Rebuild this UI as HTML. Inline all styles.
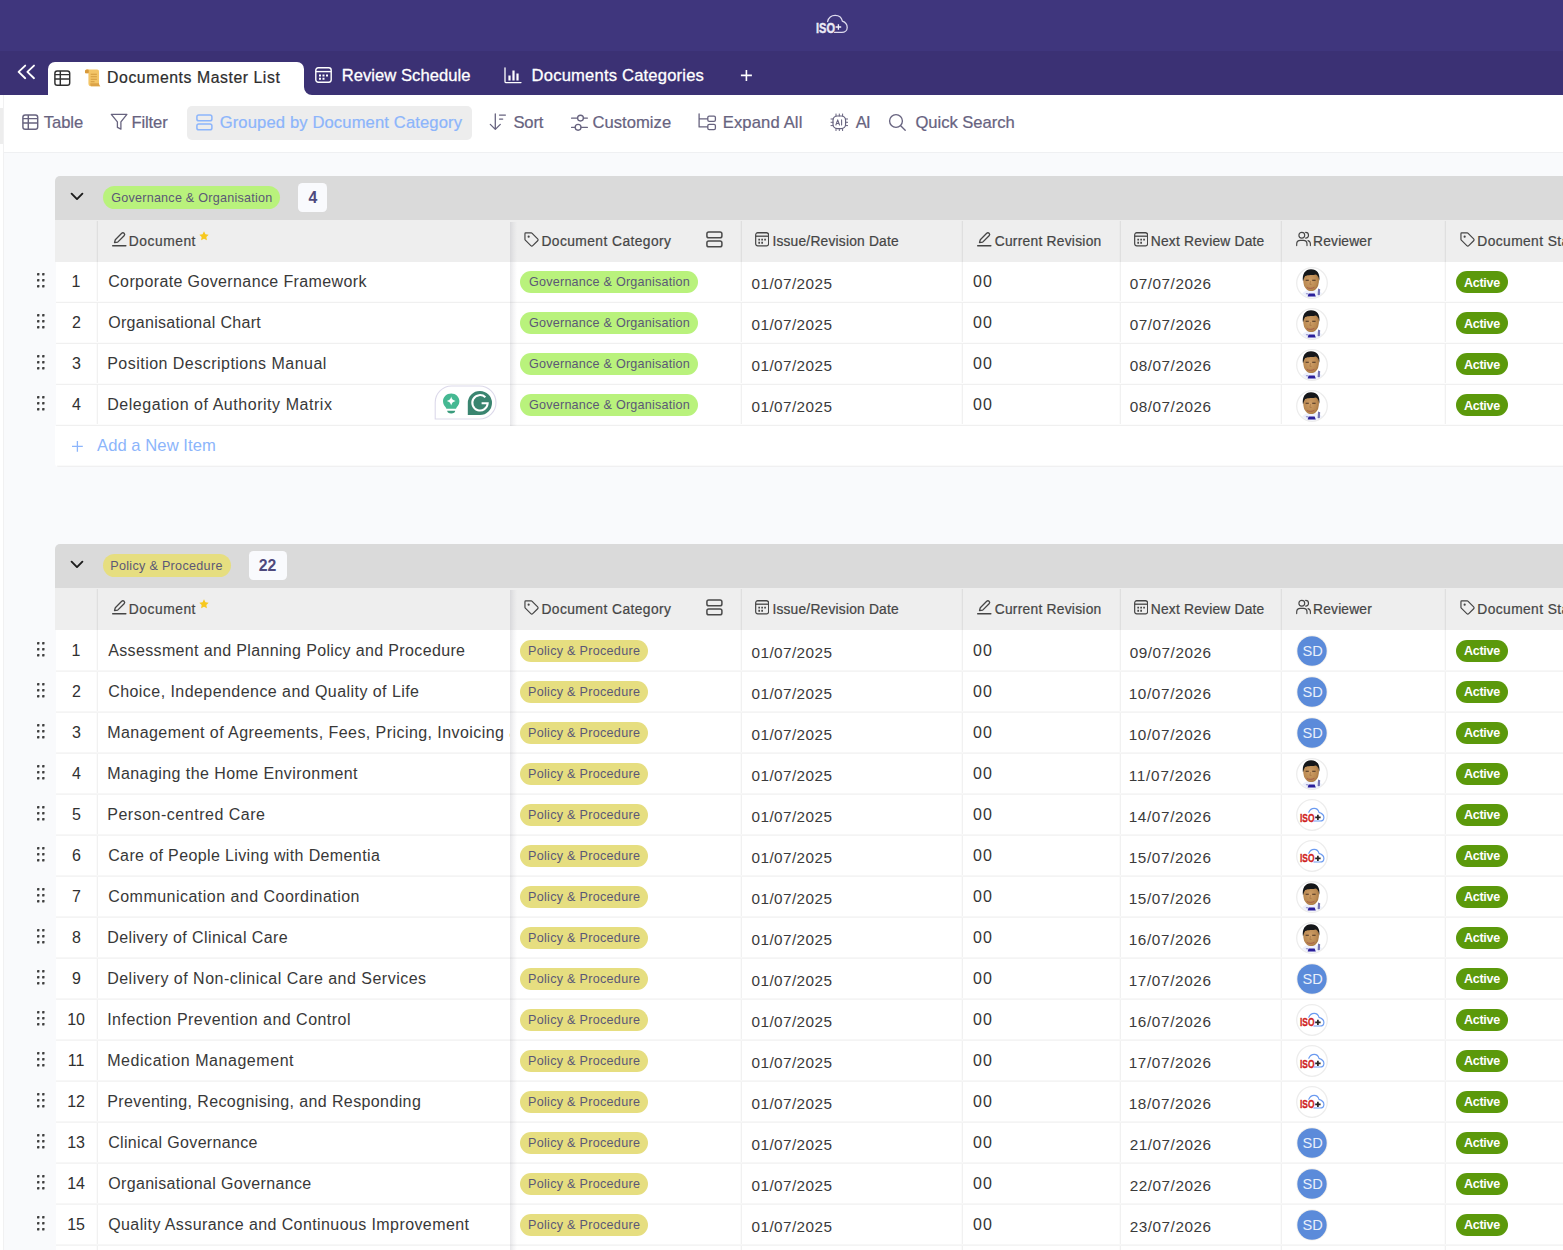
<!DOCTYPE html>
<html lang="en"><head><meta charset="utf-8"><title>Documents Master List</title>
<style>
html,body{margin:0;padding:0;}
body{width:1563px;height:1250px;overflow:hidden;position:relative;background:#f9fafc;font-family:"Liberation Sans", sans-serif;}
#root{position:absolute;left:0;top:0;width:1563px;height:1250px;overflow:hidden;}
#root>div,#root>svg,#root>span{position:absolute;display:block;}
#root>span{white-space:pre;line-height:1;}
</style></head><body><div id="root">
<div style="left:0px;top:0px;width:1563px;height:51px;background:#3f367d;"></div>
<div style="left:0px;top:51px;width:1563px;height:44px;background:#3b3174;"></div>
<div style="left:0px;top:95px;width:1563px;height:57px;background:#ffffff;"></div>
<div style="left:0px;top:151.5px;width:1563px;height:1px;background:#eff0f2;"></div>
<div style="left:0px;top:95px;width:3.2px;height:1155px;background:#ffffff;"></div>
<div style="left:0px;top:108px;width:3.2px;height:36px;background:#ededed;"></div>
<div style="left:3.2px;top:95px;width:1.2px;height:1155px;background:#f1f1f2;"></div>
<svg style="left:811.6px;top:10px;" width="40" height="28" viewBox="0 0 40 28" fill="none">
<path d="M15.6 11.6 C16.6 7.6 19.8 5.4 23.2 5.4 C27 5.4 29.6 7.8 30.4 11.2 C33.2 12.2 35.2 14.6 35.2 17.4 C35.2 20.4 32.8 22.4 29.8 22.4 L22.6 22.4" stroke="#dedbee" stroke-width="1.25" stroke-linecap="round" fill="none"/>
<path d="M23.6 17 H29.2 M26.4 14.2 V19.8" stroke="#f4f3fa" stroke-width="1.3"/>
</svg>
<div style="left:48px;top:61.5px;width:255.5px;height:34px;background:#ffffff;border-radius:7px 7px 0 0;"></div>
<svg style="left:303.5px;top:87px;" width="8" height="8" viewBox="0 0 8 8" fill="none"><path d="M0 0 V8 H8 A8 8 0 0 1 0 0 Z" fill="#ffffff"/></svg>
<svg style="left:14px;top:60px;" width="26" height="24" viewBox="0 0 26 24" fill="none"><path d="M11.2 5.6 L4.6 11.9 L11.2 18.2 M20 5.6 L13.4 11.9 L20 18.2" stroke="#ffffff" stroke-width="1.9" stroke-linecap="round" stroke-linejoin="round"/></svg>
<svg style="left:54.3px;top:69.6px;" width="17" height="17" viewBox="0 0 17 17" fill="none"><rect x="0.9" y="0.9" width="14.8" height="14.4" rx="2.3" stroke="#2f2f2f" stroke-width="1.45"/><path d="M0.9 4.6 H15.7 M0.9 8.9 H15.7 M6.3 0.9 V15.3" stroke="#2f2f2f" stroke-width="1.45"/></svg>
<svg style="left:83.6px;top:67.1px;" width="17.3" height="21.6" viewBox="0 0 18 19" fill="none" preserveAspectRatio="none">
<path d="M4.2 2.2 H13.6 C15 2.2 15.6 3 15.6 4.2 V14.4 C15.6 15.8 16.2 16.6 17 17 H7.2 C5.4 17 4.6 16 4.6 14.4 V5.6 H2.2 C1.4 5.6 1 5 1 4.2 C1 3 1.8 2.2 3 2.2 Z" fill="#f3c567"/>
<path d="M4.6 5.6 H2.2 C1.4 5.6 1 5 1 4.2 C1 3 1.8 2.2 3 2.2 H4.4 C5.2 2.6 5.2 4.6 4.6 5.6 Z" fill="#d89a3c"/>
<path d="M7.4 17 C6.6 16.4 6.4 15.4 6.6 14.4 H15.6 C15.6 15.8 16.2 16.6 17 17 Z" fill="#dca347"/>
<path d="M7 6.4 H13.4 M7 8.6 H13.4 M7 10.8 H13.4 M7 13 H11" stroke="#d29a40" stroke-width="0.9"/>
</svg>
<svg style="left:314.5px;top:67px;" width="17" height="16" viewBox="0 0 17 16" fill="none" preserveAspectRatio="none"><rect x="0.8" y="0.8" width="15.4" height="14.4" rx="2.4" stroke="#ffffff" stroke-width="1.4"/><path d="M0.8 4.6 H16.2" stroke="#ffffff" stroke-width="1.4"/><path d="M4 7.4h2v2h-2z M7.5 7.4h2v2h-2z M11 7.4h2v2h-2z M4 10.8h2v2h-2z M7.5 10.8h2v2h-2z" fill="#ffffff"/></svg>
<svg style="left:504px;top:66.6px;" width="18" height="17" viewBox="0 0 18 17" fill="none"><path d="M1 0.8 V14.4 C1 15 1.4 15.6 2.2 15.6 H17" stroke="#fff" stroke-width="1.3" stroke-linecap="round" fill="none"/><path d="M4.4 8.4h2.2v5.2h-2.2z M8.4 3.6h2.2v10h-2.2z M12.4 6.6h2.2v7h-2.2z" fill="#fff"/></svg>
<svg style="left:740px;top:69px;" width="13" height="13" viewBox="0 0 13 13" fill="none"><path d="M6.4 0.9 V11.9 M0.9 6.4 H11.9" stroke="#fff" stroke-width="1.6"/></svg>
<svg style="left:22.1px;top:114px;" width="17" height="17" viewBox="0 0 17 17" fill="none"><rect x="0.9" y="0.9" width="14.8" height="14.4" rx="2.3" stroke="#67637f" stroke-width="1.45"/><path d="M0.9 4.6 H15.7 M0.9 8.9 H15.7 M6.3 0.9 V15.3" stroke="#67637f" stroke-width="1.45"/></svg>
<svg style="left:110px;top:113.4px;" width="19" height="18" viewBox="0 0 19 18" fill="none"><path d="M1.3 1.4 H16.9 L10.9 8.9 V16.2 L7.4 14.4 V8.9 Z" stroke="#67637f" stroke-width="1.3" stroke-linejoin="round"/></svg>
<div style="left:187px;top:106px;width:285px;height:34.2px;background:#ededed;border-radius:5px;"></div>
<svg style="left:196.1px;top:113.7px;" width="17" height="17" viewBox="0 0 17 17" fill="none"><rect x="0.9" y="0.9" width="15" height="5.9" rx="1.9" stroke="#8cb5fb" stroke-width="1.5"/><rect x="0.9" y="9.9" width="15" height="5.9" rx="1.9" stroke="#8cb5fb" stroke-width="1.5"/></svg>
<svg style="left:488.8px;top:112.8px;" width="18" height="18" viewBox="0 0 18 18" fill="none"><path d="M6.3 1 V16 M1.3 11.4 L6.3 16.4 L11.3 11.4" stroke="#67637f" stroke-width="1.3" stroke-linecap="round" stroke-linejoin="round"/><path d="M10.5 2.1 H16.4 M10.5 6.1 H13.7" stroke="#67637f" stroke-width="1.3" stroke-linecap="round"/></svg>
<svg style="left:571px;top:113.9px;" width="18" height="18" viewBox="0 0 18 18" fill="none"><path d="M0.6 4.1 H6.4 M12.6 4.1 H16.4 M0.6 13.3 H4 M10.2 13.3 H16.4" stroke="#67637f" stroke-width="1.35" stroke-linecap="round"/><circle cx="9.5" cy="4.1" r="2.9" stroke="#67637f" stroke-width="1.35"/><circle cx="7.1" cy="13.3" r="2.9" stroke="#67637f" stroke-width="1.35"/></svg>
<svg style="left:698px;top:113.4px;" width="19" height="18" viewBox="0 0 19 18" fill="none"><path d="M1.1 0.8 V13.9 H9.4 M1.1 5.8 H9.4" stroke="#67637f" stroke-width="1.3" stroke-linecap="round" stroke-linejoin="round"/><rect x="9.8" y="3.1" width="7.6" height="5.2" rx="1.4" stroke="#67637f" stroke-width="1.3"/><rect x="9.8" y="11.4" width="7.6" height="5.2" rx="1.4" stroke="#67637f" stroke-width="1.3"/></svg>
<svg style="left:829.5px;top:113px;" width="19" height="19" viewBox="0 0 19 19" fill="none"><rect x="3" y="3" width="12.6" height="12.6" rx="4.4" stroke="#67637f" stroke-width="1.2"/><path d="M6 1 V3 M9.3 1 V3 M12.6 1 V3 M6 15.6 V17.6 M9.3 15.6 V17.6 M12.6 15.6 V17.6 M1 6 H3 M1 9.3 H3 M1 12.6 H3 M15.6 6 H17.6 M15.6 9.3 H17.6 M15.6 12.6 H17.6" stroke="#67637f" stroke-width="1" stroke-linecap="round"/><path d="M5.9 12 L7.7 6.8 L9.5 12 M6.5 10.4 H8.9 M11.6 6.8 V12" stroke="#67637f" stroke-width="1.05" stroke-linecap="round" stroke-linejoin="round"/></svg>
<svg style="left:887.5px;top:112.8px;" width="19" height="19" viewBox="0 0 19 19" fill="none"><circle cx="8" cy="8" r="6.4" stroke="#67637f" stroke-width="1.35"/><path d="M12.7 12.7 L17.2 17.2" stroke="#67637f" stroke-width="1.35" stroke-linecap="round"/></svg>
<div style="left:55px;top:176px;width:1508px;height:44px;background:#dadada;border-radius:5px 0 0 0;"></div>
<svg style="left:69px;top:190.5px;" width="16" height="12" viewBox="0 0 16 12" fill="none"><path d="M2.6 2.7 L8 8.1 L13.4 2.7" stroke="#1c1c1c" stroke-width="1.9" stroke-linecap="round" stroke-linejoin="round"/></svg>
<div style="left:103px;top:186.2px;width:177.4px;height:23px;background:#b9f27c;border-radius:12px;"></div>
<div style="left:298.4px;top:183.2px;width:29px;height:28.8px;background:#f9fafd;border-radius:4.5px;"></div>
<div style="left:55px;top:220px;width:1508px;height:42px;background:#eeeeee;"></div>
<div style="left:96px;top:221px;width:1px;height:41px;background:#eaeaea;"></div>
<div style="left:97px;top:221px;width:1px;height:41px;background:#dfdfdf;"></div>
<div style="left:740px;top:221px;width:1px;height:41px;background:#eaeaea;"></div>
<div style="left:741px;top:221px;width:1px;height:41px;background:#dfdfdf;"></div>
<div style="left:961px;top:221px;width:1px;height:41px;background:#eaeaea;"></div>
<div style="left:962px;top:221px;width:1px;height:41px;background:#dfdfdf;"></div>
<div style="left:1118.5px;top:221px;width:1px;height:41px;background:#eaeaea;"></div>
<div style="left:1119.5px;top:221px;width:1px;height:41px;background:#dfdfdf;"></div>
<div style="left:1280px;top:221px;width:1px;height:41px;background:#eaeaea;"></div>
<div style="left:1281px;top:221px;width:1px;height:41px;background:#dfdfdf;"></div>
<div style="left:1444px;top:221px;width:1px;height:41px;background:#eaeaea;"></div>
<div style="left:1445px;top:221px;width:1px;height:41px;background:#dfdfdf;"></div>
<svg style="left:111.6px;top:231px;" width="16" height="16" viewBox="0 0 16 16" fill="none"><path d="M2.5 11.5 L3.3 8.7 L9.7 2.3 C10.4 1.6 11.4 1.6 12.1 2.3 C12.8 3 12.8 4 12.1 4.7 L5.7 11.1 Z" stroke="#454545" stroke-width="1.3" stroke-linejoin="round"/><path d="M0.6 14.75 H13.9" stroke="#454545" stroke-width="1.3" stroke-linecap="round"/></svg>
<svg style="left:199.2px;top:231.2px;" width="10" height="10" viewBox="0 0 10 10" fill="none"><path d="M5 0.3 L6.45 3.3 L9.7 3.75 L7.35 6.05 L7.9 9.3 L5 7.75 L2.1 9.3 L2.65 6.05 L0.3 3.75 L3.55 3.3 Z" fill="#f7c81e"/></svg>
<svg style="left:523.8px;top:231.8px;" width="15.2" height="15.2" viewBox="0 0 16 16" fill="none"><path d="M1 1.8 C1 1.3 1.3 1 1.8 1 H7.6 C8 1 8.3 1.1 8.6 1.4 L14.4 7.2 C15 7.8 15 8.6 14.4 9.2 L9.2 14.4 C8.6 15 7.8 15 7.2 14.4 L1.4 8.6 C1.1 8.3 1 8 1 7.6 Z" stroke="#454545" stroke-width="1.25" stroke-linejoin="round"/><circle cx="4.9" cy="4.9" r="1.15" fill="#454545"/></svg>
<svg style="left:706.2px;top:231.1px;" width="17" height="17" viewBox="0 0 17 17" fill="none"><rect x="0.9" y="0.9" width="15" height="5.9" rx="1.9" stroke="#4a4a4a" stroke-width="1.5"/><rect x="0.9" y="9.9" width="15" height="5.9" rx="1.9" stroke="#4a4a4a" stroke-width="1.5"/></svg>
<svg style="left:755.2px;top:232px;" width="14.28" height="14.6" viewBox="0 0 17 16" fill="none" preserveAspectRatio="none"><rect x="0.8" y="0.8" width="15.4" height="14.4" rx="2.4" stroke="#454545" stroke-width="1.42857"/><path d="M0.8 4.6 H16.2" stroke="#454545" stroke-width="1.42857"/><path d="M4 7.4h2v2h-2z M7.5 7.4h2v2h-2z M11 7.4h2v2h-2z M4 10.8h2v2h-2z M7.5 10.8h2v2h-2z" fill="#454545"/></svg>
<svg style="left:976.6px;top:231px;" width="16" height="16" viewBox="0 0 16 16" fill="none"><path d="M2.5 11.5 L3.3 8.7 L9.7 2.3 C10.4 1.6 11.4 1.6 12.1 2.3 C12.8 3 12.8 4 12.1 4.7 L5.7 11.1 Z" stroke="#454545" stroke-width="1.3" stroke-linejoin="round"/><path d="M0.6 14.75 H13.9" stroke="#454545" stroke-width="1.3" stroke-linecap="round"/></svg>
<svg style="left:1133.6px;top:232px;" width="14.28" height="14.6" viewBox="0 0 17 16" fill="none" preserveAspectRatio="none"><rect x="0.8" y="0.8" width="15.4" height="14.4" rx="2.4" stroke="#454545" stroke-width="1.42857"/><path d="M0.8 4.6 H16.2" stroke="#454545" stroke-width="1.42857"/><path d="M4 7.4h2v2h-2z M7.5 7.4h2v2h-2z M11 7.4h2v2h-2z M4 10.8h2v2h-2z M7.5 10.8h2v2h-2z" fill="#454545"/></svg>
<svg style="left:1295.8px;top:231.4px;" width="16" height="16" viewBox="0 0 16 16" fill="none"><circle cx="5.8" cy="4.2" r="2.9" stroke="#454545" stroke-width="1.15"/><path d="M0.7 14.6 V13 C0.7 10.8 2.4 9.4 4.4 9.4 H7.4 C9.4 9.4 11 10.8 11 13 V14.6" stroke="#454545" stroke-width="1.15" stroke-linecap="round"/><path d="M9.6 1.3 C11.4 1.3 12.5 2.6 12.5 4.2 C12.5 5.8 11.4 7.1 9.6 7.1 M12 9.6 C13.4 10 14.4 11.2 14.4 13 V14.6" stroke="#454545" stroke-width="1.15" stroke-linecap="round"/></svg>
<svg style="left:1459.6px;top:231.8px;" width="15.2" height="15.2" viewBox="0 0 16 16" fill="none"><path d="M1 1.8 C1 1.3 1.3 1 1.8 1 H7.6 C8 1 8.3 1.1 8.6 1.4 L14.4 7.2 C15 7.8 15 8.6 14.4 9.2 L9.2 14.4 C8.6 15 7.8 15 7.2 14.4 L1.4 8.6 C1.1 8.3 1 8 1 7.6 Z" stroke="#454545" stroke-width="1.25" stroke-linejoin="round"/><circle cx="4.9" cy="4.9" r="1.15" fill="#454545"/></svg>
<div style="left:55.5px;top:262px;width:1507.5px;height:41px;background:#ffffff;"></div>
<div style="left:96px;top:262px;width:1px;height:41px;background:#fbfbfb;"></div>
<div style="left:97px;top:262px;width:1px;height:41px;background:#f1f1f1;"></div>
<div style="left:740px;top:262px;width:1px;height:41px;background:#fbfbfb;"></div>
<div style="left:741px;top:262px;width:1px;height:41px;background:#f1f1f1;"></div>
<div style="left:961px;top:262px;width:1px;height:41px;background:#fbfbfb;"></div>
<div style="left:962px;top:262px;width:1px;height:41px;background:#f1f1f1;"></div>
<div style="left:1118.5px;top:262px;width:1px;height:41px;background:#fbfbfb;"></div>
<div style="left:1119.5px;top:262px;width:1px;height:41px;background:#f1f1f1;"></div>
<div style="left:1280px;top:262px;width:1px;height:41px;background:#fbfbfb;"></div>
<div style="left:1281px;top:262px;width:1px;height:41px;background:#f1f1f1;"></div>
<div style="left:1444px;top:262px;width:1px;height:41px;background:#fbfbfb;"></div>
<div style="left:1445px;top:262px;width:1px;height:41px;background:#f1f1f1;"></div>
<svg style="left:36.5px;top:273.2px;" width="8" height="15" viewBox="0 0 8 15" fill="none"><rect x="0" y="0" width="2.4" height="2.4" rx="0.4" fill="#404040"/><rect x="5.1" y="0" width="2.4" height="2.4" rx="0.4" fill="#404040"/><rect x="0" y="6.05" width="2.4" height="2.4" rx="0.4" fill="#404040"/><rect x="5.1" y="6.05" width="2.4" height="2.4" rx="0.4" fill="#404040"/><rect x="0" y="12.1" width="2.4" height="2.4" rx="0.4" fill="#404040"/><rect x="5.1" y="12.1" width="2.4" height="2.4" rx="0.4" fill="#404040"/></svg>
<div style="left:520.3px;top:271.3px;width:177.3px;height:22.2px;background:#b9f27c;border-radius:11.1px;"></div>
<svg style="left:1296.4px;top:266.5px;" width="32" height="32" viewBox="0 0 32 32" fill="none">
<defs><clipPath id="cf266"><circle cx="16" cy="16" r="14.6"/></clipPath>
<radialGradient id="sk266" cx="0.45" cy="0.5" r="0.62"><stop offset="0" stop-color="#cf9f68"/><stop offset="0.65" stop-color="#bb8a52"/><stop offset="1" stop-color="#9d6e3c"/></radialGradient></defs>
<circle cx="16" cy="16" r="15.3" fill="#ffffff" stroke="#ededed" stroke-width="1.3"/>
<g clip-path="url(#cf266)">
<path d="M4 32 C5 25.6 9.6 23 15.4 22.6 C22 22.8 27 24.8 28.6 32 Z" fill="#eef1fc"/>
<path d="M22 21.6 L24.2 22.2 L23.8 28.4 L21.6 28 Z" fill="#7474b4"/>
<path d="M12.6 26.6 L18.6 26.6 L19.8 29.4 L11.6 29.4 Z" fill="#2a1f9a"/>
<path d="M9.6 26.8 L11.8 26.2 L11.4 27.6 Z" fill="#4b48a8"/>
<path d="M7.2 12 C7.2 7 10.4 3.4 15 3.4 C19.8 3.4 23 7 23 12 C23 14.2 22.8 16.4 22.2 18.4 C21.4 21.2 18.4 24.1 15.2 24.1 C12 24.1 9 21.2 8 18.4 C7.4 16.4 7.2 14.2 7.2 12 Z" fill="url(#sk266)"/>
<path d="M7 14.6 C5.8 7 9.2 2.2 15 2.2 C21 2.2 24.400 6.600 23.3 14 C23 10.8 22 8.4 20 7.4 C17 8.2 11.800 7.600 9.200 9 C8 10.400 7.600 12.600 7 14.600 Z" fill="#15171a"/>
<path d="M10.800 20.5 C12.800 21.700 16.400 21.700 18.400 20.300" stroke="#a25a4c" stroke-width="0.9" fill="none"/>
<path d="M9.600 13.200 H12.800 M16.200 13.200 H19.600" stroke="#4a3322" stroke-width="1.1"/>
<path d="M14.500 14 L13.900 17.400 H15.600" stroke="#a67642" stroke-width="0.7" fill="none"/>
</g></svg>
<div style="left:1455.8px;top:271.2px;width:52.7px;height:22.2px;background:#5b990b;border-radius:11.1px;"></div>
<div style="left:55.5px;top:303px;width:1507.5px;height:41px;background:#ffffff;"></div>
<div style="left:96px;top:303px;width:1px;height:41px;background:#fbfbfb;"></div>
<div style="left:97px;top:303px;width:1px;height:41px;background:#f1f1f1;"></div>
<div style="left:740px;top:303px;width:1px;height:41px;background:#fbfbfb;"></div>
<div style="left:741px;top:303px;width:1px;height:41px;background:#f1f1f1;"></div>
<div style="left:961px;top:303px;width:1px;height:41px;background:#fbfbfb;"></div>
<div style="left:962px;top:303px;width:1px;height:41px;background:#f1f1f1;"></div>
<div style="left:1118.5px;top:303px;width:1px;height:41px;background:#fbfbfb;"></div>
<div style="left:1119.5px;top:303px;width:1px;height:41px;background:#f1f1f1;"></div>
<div style="left:1280px;top:303px;width:1px;height:41px;background:#fbfbfb;"></div>
<div style="left:1281px;top:303px;width:1px;height:41px;background:#f1f1f1;"></div>
<div style="left:1444px;top:303px;width:1px;height:41px;background:#fbfbfb;"></div>
<div style="left:1445px;top:303px;width:1px;height:41px;background:#f1f1f1;"></div>
<svg style="left:36.5px;top:314.2px;" width="8" height="15" viewBox="0 0 8 15" fill="none"><rect x="0" y="0" width="2.4" height="2.4" rx="0.4" fill="#404040"/><rect x="5.1" y="0" width="2.4" height="2.4" rx="0.4" fill="#404040"/><rect x="0" y="6.05" width="2.4" height="2.4" rx="0.4" fill="#404040"/><rect x="5.1" y="6.05" width="2.4" height="2.4" rx="0.4" fill="#404040"/><rect x="0" y="12.1" width="2.4" height="2.4" rx="0.4" fill="#404040"/><rect x="5.1" y="12.1" width="2.4" height="2.4" rx="0.4" fill="#404040"/></svg>
<div style="left:520.3px;top:312.3px;width:177.3px;height:22.2px;background:#b9f27c;border-radius:11.1px;"></div>
<svg style="left:1296.4px;top:307.5px;" width="32" height="32" viewBox="0 0 32 32" fill="none">
<defs><clipPath id="cf307"><circle cx="16" cy="16" r="14.6"/></clipPath>
<radialGradient id="sk307" cx="0.45" cy="0.5" r="0.62"><stop offset="0" stop-color="#cf9f68"/><stop offset="0.65" stop-color="#bb8a52"/><stop offset="1" stop-color="#9d6e3c"/></radialGradient></defs>
<circle cx="16" cy="16" r="15.3" fill="#ffffff" stroke="#ededed" stroke-width="1.3"/>
<g clip-path="url(#cf307)">
<path d="M4 32 C5 25.6 9.6 23 15.4 22.6 C22 22.8 27 24.8 28.6 32 Z" fill="#eef1fc"/>
<path d="M22 21.6 L24.2 22.2 L23.8 28.4 L21.6 28 Z" fill="#7474b4"/>
<path d="M12.6 26.6 L18.6 26.6 L19.8 29.4 L11.6 29.4 Z" fill="#2a1f9a"/>
<path d="M9.6 26.8 L11.8 26.2 L11.4 27.6 Z" fill="#4b48a8"/>
<path d="M7.2 12 C7.2 7 10.4 3.4 15 3.4 C19.8 3.4 23 7 23 12 C23 14.2 22.8 16.4 22.2 18.4 C21.4 21.2 18.4 24.1 15.2 24.1 C12 24.1 9 21.2 8 18.4 C7.4 16.4 7.2 14.2 7.2 12 Z" fill="url(#sk307)"/>
<path d="M7 14.6 C5.8 7 9.2 2.2 15 2.2 C21 2.2 24.400 6.600 23.3 14 C23 10.8 22 8.4 20 7.4 C17 8.2 11.800 7.600 9.200 9 C8 10.400 7.600 12.600 7 14.600 Z" fill="#15171a"/>
<path d="M10.800 20.5 C12.800 21.700 16.400 21.700 18.400 20.300" stroke="#a25a4c" stroke-width="0.9" fill="none"/>
<path d="M9.600 13.200 H12.800 M16.200 13.200 H19.600" stroke="#4a3322" stroke-width="1.1"/>
<path d="M14.500 14 L13.900 17.400 H15.600" stroke="#a67642" stroke-width="0.7" fill="none"/>
</g></svg>
<div style="left:1455.8px;top:312.2px;width:52.7px;height:22.2px;background:#5b990b;border-radius:11.1px;"></div>
<div style="left:55.5px;top:344px;width:1507.5px;height:41px;background:#ffffff;"></div>
<div style="left:96px;top:344px;width:1px;height:41px;background:#fbfbfb;"></div>
<div style="left:97px;top:344px;width:1px;height:41px;background:#f1f1f1;"></div>
<div style="left:740px;top:344px;width:1px;height:41px;background:#fbfbfb;"></div>
<div style="left:741px;top:344px;width:1px;height:41px;background:#f1f1f1;"></div>
<div style="left:961px;top:344px;width:1px;height:41px;background:#fbfbfb;"></div>
<div style="left:962px;top:344px;width:1px;height:41px;background:#f1f1f1;"></div>
<div style="left:1118.5px;top:344px;width:1px;height:41px;background:#fbfbfb;"></div>
<div style="left:1119.5px;top:344px;width:1px;height:41px;background:#f1f1f1;"></div>
<div style="left:1280px;top:344px;width:1px;height:41px;background:#fbfbfb;"></div>
<div style="left:1281px;top:344px;width:1px;height:41px;background:#f1f1f1;"></div>
<div style="left:1444px;top:344px;width:1px;height:41px;background:#fbfbfb;"></div>
<div style="left:1445px;top:344px;width:1px;height:41px;background:#f1f1f1;"></div>
<svg style="left:36.5px;top:355.2px;" width="8" height="15" viewBox="0 0 8 15" fill="none"><rect x="0" y="0" width="2.4" height="2.4" rx="0.4" fill="#404040"/><rect x="5.1" y="0" width="2.4" height="2.4" rx="0.4" fill="#404040"/><rect x="0" y="6.05" width="2.4" height="2.4" rx="0.4" fill="#404040"/><rect x="5.1" y="6.05" width="2.4" height="2.4" rx="0.4" fill="#404040"/><rect x="0" y="12.1" width="2.4" height="2.4" rx="0.4" fill="#404040"/><rect x="5.1" y="12.1" width="2.4" height="2.4" rx="0.4" fill="#404040"/></svg>
<div style="left:520.3px;top:353.3px;width:177.3px;height:22.2px;background:#b9f27c;border-radius:11.1px;"></div>
<svg style="left:1296.4px;top:348.5px;" width="32" height="32" viewBox="0 0 32 32" fill="none">
<defs><clipPath id="cf348"><circle cx="16" cy="16" r="14.6"/></clipPath>
<radialGradient id="sk348" cx="0.45" cy="0.5" r="0.62"><stop offset="0" stop-color="#cf9f68"/><stop offset="0.65" stop-color="#bb8a52"/><stop offset="1" stop-color="#9d6e3c"/></radialGradient></defs>
<circle cx="16" cy="16" r="15.3" fill="#ffffff" stroke="#ededed" stroke-width="1.3"/>
<g clip-path="url(#cf348)">
<path d="M4 32 C5 25.6 9.6 23 15.4 22.6 C22 22.8 27 24.8 28.6 32 Z" fill="#eef1fc"/>
<path d="M22 21.6 L24.2 22.2 L23.8 28.4 L21.6 28 Z" fill="#7474b4"/>
<path d="M12.6 26.6 L18.6 26.6 L19.8 29.4 L11.6 29.4 Z" fill="#2a1f9a"/>
<path d="M9.6 26.8 L11.8 26.2 L11.4 27.6 Z" fill="#4b48a8"/>
<path d="M7.2 12 C7.2 7 10.4 3.4 15 3.4 C19.8 3.4 23 7 23 12 C23 14.2 22.8 16.4 22.2 18.4 C21.4 21.2 18.4 24.1 15.2 24.1 C12 24.1 9 21.2 8 18.4 C7.4 16.4 7.2 14.2 7.2 12 Z" fill="url(#sk348)"/>
<path d="M7 14.6 C5.8 7 9.2 2.2 15 2.2 C21 2.2 24.400 6.600 23.3 14 C23 10.8 22 8.4 20 7.4 C17 8.2 11.800 7.600 9.200 9 C8 10.400 7.600 12.600 7 14.600 Z" fill="#15171a"/>
<path d="M10.800 20.5 C12.800 21.700 16.400 21.700 18.400 20.300" stroke="#a25a4c" stroke-width="0.9" fill="none"/>
<path d="M9.600 13.200 H12.800 M16.200 13.200 H19.600" stroke="#4a3322" stroke-width="1.1"/>
<path d="M14.500 14 L13.900 17.400 H15.600" stroke="#a67642" stroke-width="0.7" fill="none"/>
</g></svg>
<div style="left:1455.8px;top:353.2px;width:52.7px;height:22.2px;background:#5b990b;border-radius:11.1px;"></div>
<div style="left:55.5px;top:385px;width:1507.5px;height:41px;background:#ffffff;"></div>
<div style="left:96px;top:385px;width:1px;height:41px;background:#fbfbfb;"></div>
<div style="left:97px;top:385px;width:1px;height:41px;background:#f1f1f1;"></div>
<div style="left:740px;top:385px;width:1px;height:41px;background:#fbfbfb;"></div>
<div style="left:741px;top:385px;width:1px;height:41px;background:#f1f1f1;"></div>
<div style="left:961px;top:385px;width:1px;height:41px;background:#fbfbfb;"></div>
<div style="left:962px;top:385px;width:1px;height:41px;background:#f1f1f1;"></div>
<div style="left:1118.5px;top:385px;width:1px;height:41px;background:#fbfbfb;"></div>
<div style="left:1119.5px;top:385px;width:1px;height:41px;background:#f1f1f1;"></div>
<div style="left:1280px;top:385px;width:1px;height:41px;background:#fbfbfb;"></div>
<div style="left:1281px;top:385px;width:1px;height:41px;background:#f1f1f1;"></div>
<div style="left:1444px;top:385px;width:1px;height:41px;background:#fbfbfb;"></div>
<div style="left:1445px;top:385px;width:1px;height:41px;background:#f1f1f1;"></div>
<svg style="left:36.5px;top:396.2px;" width="8" height="15" viewBox="0 0 8 15" fill="none"><rect x="0" y="0" width="2.4" height="2.4" rx="0.4" fill="#404040"/><rect x="5.1" y="0" width="2.4" height="2.4" rx="0.4" fill="#404040"/><rect x="0" y="6.05" width="2.4" height="2.4" rx="0.4" fill="#404040"/><rect x="5.1" y="6.05" width="2.4" height="2.4" rx="0.4" fill="#404040"/><rect x="0" y="12.1" width="2.4" height="2.4" rx="0.4" fill="#404040"/><rect x="5.1" y="12.1" width="2.4" height="2.4" rx="0.4" fill="#404040"/></svg>
<div style="left:520.3px;top:394.3px;width:177.3px;height:22.2px;background:#b9f27c;border-radius:11.1px;"></div>
<svg style="left:1296.4px;top:389.5px;" width="32" height="32" viewBox="0 0 32 32" fill="none">
<defs><clipPath id="cf389"><circle cx="16" cy="16" r="14.6"/></clipPath>
<radialGradient id="sk389" cx="0.45" cy="0.5" r="0.62"><stop offset="0" stop-color="#cf9f68"/><stop offset="0.65" stop-color="#bb8a52"/><stop offset="1" stop-color="#9d6e3c"/></radialGradient></defs>
<circle cx="16" cy="16" r="15.3" fill="#ffffff" stroke="#ededed" stroke-width="1.3"/>
<g clip-path="url(#cf389)">
<path d="M4 32 C5 25.6 9.6 23 15.4 22.6 C22 22.8 27 24.8 28.6 32 Z" fill="#eef1fc"/>
<path d="M22 21.6 L24.2 22.2 L23.8 28.4 L21.6 28 Z" fill="#7474b4"/>
<path d="M12.6 26.6 L18.6 26.6 L19.8 29.4 L11.6 29.4 Z" fill="#2a1f9a"/>
<path d="M9.6 26.8 L11.8 26.2 L11.4 27.6 Z" fill="#4b48a8"/>
<path d="M7.2 12 C7.2 7 10.4 3.4 15 3.4 C19.8 3.4 23 7 23 12 C23 14.2 22.8 16.4 22.2 18.4 C21.4 21.2 18.4 24.1 15.2 24.1 C12 24.1 9 21.2 8 18.4 C7.4 16.4 7.2 14.2 7.2 12 Z" fill="url(#sk389)"/>
<path d="M7 14.6 C5.8 7 9.2 2.2 15 2.2 C21 2.2 24.400 6.600 23.3 14 C23 10.8 22 8.4 20 7.4 C17 8.2 11.800 7.600 9.200 9 C8 10.400 7.600 12.600 7 14.600 Z" fill="#15171a"/>
<path d="M10.800 20.5 C12.800 21.700 16.400 21.700 18.400 20.300" stroke="#a25a4c" stroke-width="0.9" fill="none"/>
<path d="M9.600 13.200 H12.800 M16.200 13.200 H19.600" stroke="#4a3322" stroke-width="1.1"/>
<path d="M14.500 14 L13.900 17.400 H15.600" stroke="#a67642" stroke-width="0.7" fill="none"/>
</g></svg>
<div style="left:1455.8px;top:394.2px;width:52.7px;height:22.2px;background:#5b990b;border-radius:11.1px;"></div>
<div style="left:55.5px;top:301px;width:1507.5px;height:1px;background:#fcfcfc;"></div>
<div style="left:55.5px;top:302px;width:1507.5px;height:1px;background:#f0f0f0;"></div>
<div style="left:55.5px;top:342px;width:1507.5px;height:1px;background:#fcfcfc;"></div>
<div style="left:55.5px;top:343px;width:1507.5px;height:1px;background:#f0f0f0;"></div>
<div style="left:55.5px;top:383px;width:1507.5px;height:1px;background:#fcfcfc;"></div>
<div style="left:55.5px;top:384px;width:1507.5px;height:1px;background:#f0f0f0;"></div>
<div style="left:55.5px;top:424px;width:1507.5px;height:1px;background:#fcfcfc;"></div>
<div style="left:55.5px;top:425px;width:1507.5px;height:1px;background:#f0f0f0;"></div>
<div style="left:510.4px;top:221.5px;width:7px;height:204.5px;background:linear-gradient(to right,rgba(110,110,125,.17),rgba(110,110,125,.07) 50%,rgba(110,110,125,0));"></div>
<div style="left:55px;top:426px;width:1508px;height:41px;background:#ffffff;border-radius:0 0 0 4px;"></div>
<div style="left:57px;top:465px;width:1506px;height:1px;background:#fafafa;"></div>
<div style="left:56.5px;top:466px;width:1506.5px;height:1px;background:#f0f0f1;border-radius:0 0 0 3px;"></div>
<svg style="left:70.5px;top:440.4px;" width="13" height="13" viewBox="0 0 13 13" fill="none"><path d="M6.4 1 V11.8 M1 6.4 H11.8" stroke="#8cb5fb" stroke-width="1.3"/></svg>
<div style="left:55px;top:544px;width:1508px;height:44px;background:#dadada;border-radius:5px 0 0 0;"></div>
<svg style="left:69px;top:558.5px;" width="16" height="12" viewBox="0 0 16 12" fill="none"><path d="M2.6 2.7 L8 8.1 L13.4 2.7" stroke="#1c1c1c" stroke-width="1.9" stroke-linecap="round" stroke-linejoin="round"/></svg>
<div style="left:103px;top:554.2px;width:127.6px;height:23px;background:#e6de80;border-radius:12px;"></div>
<div style="left:248.6px;top:551.2px;width:38px;height:28.8px;background:#f9fafd;border-radius:4.5px;"></div>
<div style="left:55px;top:588px;width:1508px;height:42px;background:#eeeeee;"></div>
<div style="left:96px;top:589px;width:1px;height:41px;background:#eaeaea;"></div>
<div style="left:97px;top:589px;width:1px;height:41px;background:#dfdfdf;"></div>
<div style="left:740px;top:589px;width:1px;height:41px;background:#eaeaea;"></div>
<div style="left:741px;top:589px;width:1px;height:41px;background:#dfdfdf;"></div>
<div style="left:961px;top:589px;width:1px;height:41px;background:#eaeaea;"></div>
<div style="left:962px;top:589px;width:1px;height:41px;background:#dfdfdf;"></div>
<div style="left:1118.5px;top:589px;width:1px;height:41px;background:#eaeaea;"></div>
<div style="left:1119.5px;top:589px;width:1px;height:41px;background:#dfdfdf;"></div>
<div style="left:1280px;top:589px;width:1px;height:41px;background:#eaeaea;"></div>
<div style="left:1281px;top:589px;width:1px;height:41px;background:#dfdfdf;"></div>
<div style="left:1444px;top:589px;width:1px;height:41px;background:#eaeaea;"></div>
<div style="left:1445px;top:589px;width:1px;height:41px;background:#dfdfdf;"></div>
<svg style="left:111.6px;top:599px;" width="16" height="16" viewBox="0 0 16 16" fill="none"><path d="M2.5 11.5 L3.3 8.7 L9.7 2.3 C10.4 1.6 11.4 1.6 12.1 2.3 C12.8 3 12.8 4 12.1 4.7 L5.7 11.1 Z" stroke="#454545" stroke-width="1.3" stroke-linejoin="round"/><path d="M0.6 14.75 H13.9" stroke="#454545" stroke-width="1.3" stroke-linecap="round"/></svg>
<svg style="left:199.2px;top:599.2px;" width="10" height="10" viewBox="0 0 10 10" fill="none"><path d="M5 0.3 L6.45 3.3 L9.7 3.75 L7.35 6.05 L7.9 9.3 L5 7.75 L2.1 9.3 L2.65 6.05 L0.3 3.75 L3.55 3.3 Z" fill="#f7c81e"/></svg>
<svg style="left:523.8px;top:599.8px;" width="15.2" height="15.2" viewBox="0 0 16 16" fill="none"><path d="M1 1.8 C1 1.3 1.3 1 1.8 1 H7.6 C8 1 8.3 1.1 8.6 1.4 L14.4 7.2 C15 7.8 15 8.6 14.4 9.2 L9.2 14.4 C8.6 15 7.8 15 7.2 14.4 L1.4 8.6 C1.1 8.3 1 8 1 7.6 Z" stroke="#454545" stroke-width="1.25" stroke-linejoin="round"/><circle cx="4.9" cy="4.9" r="1.15" fill="#454545"/></svg>
<svg style="left:706.2px;top:599.1px;" width="17" height="17" viewBox="0 0 17 17" fill="none"><rect x="0.9" y="0.9" width="15" height="5.9" rx="1.9" stroke="#4a4a4a" stroke-width="1.5"/><rect x="0.9" y="9.9" width="15" height="5.9" rx="1.9" stroke="#4a4a4a" stroke-width="1.5"/></svg>
<svg style="left:755.2px;top:600px;" width="14.28" height="14.6" viewBox="0 0 17 16" fill="none" preserveAspectRatio="none"><rect x="0.8" y="0.8" width="15.4" height="14.4" rx="2.4" stroke="#454545" stroke-width="1.42857"/><path d="M0.8 4.6 H16.2" stroke="#454545" stroke-width="1.42857"/><path d="M4 7.4h2v2h-2z M7.5 7.4h2v2h-2z M11 7.4h2v2h-2z M4 10.8h2v2h-2z M7.5 10.8h2v2h-2z" fill="#454545"/></svg>
<svg style="left:976.6px;top:599px;" width="16" height="16" viewBox="0 0 16 16" fill="none"><path d="M2.5 11.5 L3.3 8.7 L9.7 2.3 C10.4 1.6 11.4 1.6 12.1 2.3 C12.8 3 12.8 4 12.1 4.7 L5.7 11.1 Z" stroke="#454545" stroke-width="1.3" stroke-linejoin="round"/><path d="M0.6 14.75 H13.9" stroke="#454545" stroke-width="1.3" stroke-linecap="round"/></svg>
<svg style="left:1133.6px;top:600px;" width="14.28" height="14.6" viewBox="0 0 17 16" fill="none" preserveAspectRatio="none"><rect x="0.8" y="0.8" width="15.4" height="14.4" rx="2.4" stroke="#454545" stroke-width="1.42857"/><path d="M0.8 4.6 H16.2" stroke="#454545" stroke-width="1.42857"/><path d="M4 7.4h2v2h-2z M7.5 7.4h2v2h-2z M11 7.4h2v2h-2z M4 10.8h2v2h-2z M7.5 10.8h2v2h-2z" fill="#454545"/></svg>
<svg style="left:1295.8px;top:599.4px;" width="16" height="16" viewBox="0 0 16 16" fill="none"><circle cx="5.8" cy="4.2" r="2.9" stroke="#454545" stroke-width="1.15"/><path d="M0.7 14.6 V13 C0.7 10.8 2.4 9.4 4.4 9.4 H7.4 C9.4 9.4 11 10.8 11 13 V14.6" stroke="#454545" stroke-width="1.15" stroke-linecap="round"/><path d="M9.6 1.3 C11.4 1.3 12.5 2.6 12.5 4.2 C12.5 5.8 11.4 7.1 9.6 7.1 M12 9.6 C13.4 10 14.4 11.2 14.4 13 V14.6" stroke="#454545" stroke-width="1.15" stroke-linecap="round"/></svg>
<svg style="left:1459.6px;top:599.8px;" width="15.2" height="15.2" viewBox="0 0 16 16" fill="none"><path d="M1 1.8 C1 1.3 1.3 1 1.8 1 H7.6 C8 1 8.3 1.1 8.6 1.4 L14.4 7.2 C15 7.8 15 8.6 14.4 9.2 L9.2 14.4 C8.6 15 7.8 15 7.2 14.4 L1.4 8.6 C1.1 8.3 1 8 1 7.6 Z" stroke="#454545" stroke-width="1.25" stroke-linejoin="round"/><circle cx="4.9" cy="4.9" r="1.15" fill="#454545"/></svg>
<div style="left:55.5px;top:630px;width:1507.5px;height:41px;background:#ffffff;"></div>
<div style="left:96px;top:630px;width:1px;height:41px;background:#fbfbfb;"></div>
<div style="left:97px;top:630px;width:1px;height:41px;background:#f1f1f1;"></div>
<div style="left:740px;top:630px;width:1px;height:41px;background:#fbfbfb;"></div>
<div style="left:741px;top:630px;width:1px;height:41px;background:#f1f1f1;"></div>
<div style="left:961px;top:630px;width:1px;height:41px;background:#fbfbfb;"></div>
<div style="left:962px;top:630px;width:1px;height:41px;background:#f1f1f1;"></div>
<div style="left:1118.5px;top:630px;width:1px;height:41px;background:#fbfbfb;"></div>
<div style="left:1119.5px;top:630px;width:1px;height:41px;background:#f1f1f1;"></div>
<div style="left:1280px;top:630px;width:1px;height:41px;background:#fbfbfb;"></div>
<div style="left:1281px;top:630px;width:1px;height:41px;background:#f1f1f1;"></div>
<div style="left:1444px;top:630px;width:1px;height:41px;background:#fbfbfb;"></div>
<div style="left:1445px;top:630px;width:1px;height:41px;background:#f1f1f1;"></div>
<svg style="left:36.5px;top:641.8px;" width="8" height="15" viewBox="0 0 8 15" fill="none"><rect x="0" y="0" width="2.4" height="2.4" rx="0.4" fill="#404040"/><rect x="5.1" y="0" width="2.4" height="2.4" rx="0.4" fill="#404040"/><rect x="0" y="6.05" width="2.4" height="2.4" rx="0.4" fill="#404040"/><rect x="5.1" y="6.05" width="2.4" height="2.4" rx="0.4" fill="#404040"/><rect x="0" y="12.1" width="2.4" height="2.4" rx="0.4" fill="#404040"/><rect x="5.1" y="12.1" width="2.4" height="2.4" rx="0.4" fill="#404040"/></svg>
<div style="left:520.3px;top:639.9px;width:127.5px;height:22.2px;background:#e6de80;border-radius:11.1px;"></div>
<svg style="left:1296.4px;top:635.1px;" width="32" height="32" viewBox="0 0 32 32" fill="none"><circle cx="16" cy="16" r="15.7" fill="#f5f2ed"/><circle cx="16" cy="16" r="14.7" fill="#5b8bda"/></svg>
<div style="left:1455.8px;top:639.8px;width:52.7px;height:22.2px;background:#5b990b;border-radius:11.1px;"></div>
<div style="left:55.5px;top:671px;width:1507.5px;height:41px;background:#ffffff;"></div>
<div style="left:96px;top:671px;width:1px;height:41px;background:#fbfbfb;"></div>
<div style="left:97px;top:671px;width:1px;height:41px;background:#f1f1f1;"></div>
<div style="left:740px;top:671px;width:1px;height:41px;background:#fbfbfb;"></div>
<div style="left:741px;top:671px;width:1px;height:41px;background:#f1f1f1;"></div>
<div style="left:961px;top:671px;width:1px;height:41px;background:#fbfbfb;"></div>
<div style="left:962px;top:671px;width:1px;height:41px;background:#f1f1f1;"></div>
<div style="left:1118.5px;top:671px;width:1px;height:41px;background:#fbfbfb;"></div>
<div style="left:1119.5px;top:671px;width:1px;height:41px;background:#f1f1f1;"></div>
<div style="left:1280px;top:671px;width:1px;height:41px;background:#fbfbfb;"></div>
<div style="left:1281px;top:671px;width:1px;height:41px;background:#f1f1f1;"></div>
<div style="left:1444px;top:671px;width:1px;height:41px;background:#fbfbfb;"></div>
<div style="left:1445px;top:671px;width:1px;height:41px;background:#f1f1f1;"></div>
<svg style="left:36.5px;top:682.8px;" width="8" height="15" viewBox="0 0 8 15" fill="none"><rect x="0" y="0" width="2.4" height="2.4" rx="0.4" fill="#404040"/><rect x="5.1" y="0" width="2.4" height="2.4" rx="0.4" fill="#404040"/><rect x="0" y="6.05" width="2.4" height="2.4" rx="0.4" fill="#404040"/><rect x="5.1" y="6.05" width="2.4" height="2.4" rx="0.4" fill="#404040"/><rect x="0" y="12.1" width="2.4" height="2.4" rx="0.4" fill="#404040"/><rect x="5.1" y="12.1" width="2.4" height="2.4" rx="0.4" fill="#404040"/></svg>
<div style="left:520.3px;top:680.9px;width:127.5px;height:22.2px;background:#e6de80;border-radius:11.1px;"></div>
<svg style="left:1296.4px;top:676.1px;" width="32" height="32" viewBox="0 0 32 32" fill="none"><circle cx="16" cy="16" r="15.7" fill="#f5f2ed"/><circle cx="16" cy="16" r="14.7" fill="#5b8bda"/></svg>
<div style="left:1455.8px;top:680.8px;width:52.7px;height:22.2px;background:#5b990b;border-radius:11.1px;"></div>
<div style="left:55.5px;top:712px;width:1507.5px;height:41px;background:#ffffff;"></div>
<div style="left:96px;top:712px;width:1px;height:41px;background:#fbfbfb;"></div>
<div style="left:97px;top:712px;width:1px;height:41px;background:#f1f1f1;"></div>
<div style="left:740px;top:712px;width:1px;height:41px;background:#fbfbfb;"></div>
<div style="left:741px;top:712px;width:1px;height:41px;background:#f1f1f1;"></div>
<div style="left:961px;top:712px;width:1px;height:41px;background:#fbfbfb;"></div>
<div style="left:962px;top:712px;width:1px;height:41px;background:#f1f1f1;"></div>
<div style="left:1118.5px;top:712px;width:1px;height:41px;background:#fbfbfb;"></div>
<div style="left:1119.5px;top:712px;width:1px;height:41px;background:#f1f1f1;"></div>
<div style="left:1280px;top:712px;width:1px;height:41px;background:#fbfbfb;"></div>
<div style="left:1281px;top:712px;width:1px;height:41px;background:#f1f1f1;"></div>
<div style="left:1444px;top:712px;width:1px;height:41px;background:#fbfbfb;"></div>
<div style="left:1445px;top:712px;width:1px;height:41px;background:#f1f1f1;"></div>
<svg style="left:36.5px;top:723.8px;" width="8" height="15" viewBox="0 0 8 15" fill="none"><rect x="0" y="0" width="2.4" height="2.4" rx="0.4" fill="#404040"/><rect x="5.1" y="0" width="2.4" height="2.4" rx="0.4" fill="#404040"/><rect x="0" y="6.05" width="2.4" height="2.4" rx="0.4" fill="#404040"/><rect x="5.1" y="6.05" width="2.4" height="2.4" rx="0.4" fill="#404040"/><rect x="0" y="12.1" width="2.4" height="2.4" rx="0.4" fill="#404040"/><rect x="5.1" y="12.1" width="2.4" height="2.4" rx="0.4" fill="#404040"/></svg>
<div style="left:520.3px;top:721.9px;width:127.5px;height:22.2px;background:#e6de80;border-radius:11.1px;"></div>
<svg style="left:1296.4px;top:717.1px;" width="32" height="32" viewBox="0 0 32 32" fill="none"><circle cx="16" cy="16" r="15.7" fill="#f5f2ed"/><circle cx="16" cy="16" r="14.7" fill="#5b8bda"/></svg>
<div style="left:1455.8px;top:721.8px;width:52.7px;height:22.2px;background:#5b990b;border-radius:11.1px;"></div>
<div style="left:55.5px;top:753px;width:1507.5px;height:41px;background:#ffffff;"></div>
<div style="left:96px;top:753px;width:1px;height:41px;background:#fbfbfb;"></div>
<div style="left:97px;top:753px;width:1px;height:41px;background:#f1f1f1;"></div>
<div style="left:740px;top:753px;width:1px;height:41px;background:#fbfbfb;"></div>
<div style="left:741px;top:753px;width:1px;height:41px;background:#f1f1f1;"></div>
<div style="left:961px;top:753px;width:1px;height:41px;background:#fbfbfb;"></div>
<div style="left:962px;top:753px;width:1px;height:41px;background:#f1f1f1;"></div>
<div style="left:1118.5px;top:753px;width:1px;height:41px;background:#fbfbfb;"></div>
<div style="left:1119.5px;top:753px;width:1px;height:41px;background:#f1f1f1;"></div>
<div style="left:1280px;top:753px;width:1px;height:41px;background:#fbfbfb;"></div>
<div style="left:1281px;top:753px;width:1px;height:41px;background:#f1f1f1;"></div>
<div style="left:1444px;top:753px;width:1px;height:41px;background:#fbfbfb;"></div>
<div style="left:1445px;top:753px;width:1px;height:41px;background:#f1f1f1;"></div>
<svg style="left:36.5px;top:764.8px;" width="8" height="15" viewBox="0 0 8 15" fill="none"><rect x="0" y="0" width="2.4" height="2.4" rx="0.4" fill="#404040"/><rect x="5.1" y="0" width="2.4" height="2.4" rx="0.4" fill="#404040"/><rect x="0" y="6.05" width="2.4" height="2.4" rx="0.4" fill="#404040"/><rect x="5.1" y="6.05" width="2.4" height="2.4" rx="0.4" fill="#404040"/><rect x="0" y="12.1" width="2.4" height="2.4" rx="0.4" fill="#404040"/><rect x="5.1" y="12.1" width="2.4" height="2.4" rx="0.4" fill="#404040"/></svg>
<div style="left:520.3px;top:762.9px;width:127.5px;height:22.2px;background:#e6de80;border-radius:11.1px;"></div>
<svg style="left:1296.4px;top:758.1px;" width="32" height="32" viewBox="0 0 32 32" fill="none">
<defs><clipPath id="cf758"><circle cx="16" cy="16" r="14.6"/></clipPath>
<radialGradient id="sk758" cx="0.45" cy="0.5" r="0.62"><stop offset="0" stop-color="#cf9f68"/><stop offset="0.65" stop-color="#bb8a52"/><stop offset="1" stop-color="#9d6e3c"/></radialGradient></defs>
<circle cx="16" cy="16" r="15.3" fill="#ffffff" stroke="#ededed" stroke-width="1.3"/>
<g clip-path="url(#cf758)">
<path d="M4 32 C5 25.6 9.6 23 15.4 22.6 C22 22.8 27 24.8 28.6 32 Z" fill="#eef1fc"/>
<path d="M22 21.6 L24.2 22.2 L23.8 28.4 L21.6 28 Z" fill="#7474b4"/>
<path d="M12.6 26.6 L18.6 26.6 L19.8 29.4 L11.6 29.4 Z" fill="#2a1f9a"/>
<path d="M9.6 26.8 L11.8 26.2 L11.4 27.6 Z" fill="#4b48a8"/>
<path d="M7.2 12 C7.2 7 10.4 3.4 15 3.4 C19.8 3.4 23 7 23 12 C23 14.2 22.8 16.4 22.2 18.4 C21.4 21.2 18.4 24.1 15.2 24.1 C12 24.1 9 21.2 8 18.4 C7.4 16.4 7.2 14.2 7.2 12 Z" fill="url(#sk758)"/>
<path d="M7 14.6 C5.8 7 9.2 2.2 15 2.2 C21 2.2 24.400 6.600 23.3 14 C23 10.8 22 8.4 20 7.4 C17 8.2 11.800 7.600 9.200 9 C8 10.400 7.600 12.600 7 14.600 Z" fill="#15171a"/>
<path d="M10.800 20.5 C12.800 21.700 16.400 21.700 18.400 20.300" stroke="#a25a4c" stroke-width="0.9" fill="none"/>
<path d="M9.600 13.200 H12.800 M16.200 13.200 H19.600" stroke="#4a3322" stroke-width="1.1"/>
<path d="M14.500 14 L13.900 17.400 H15.600" stroke="#a67642" stroke-width="0.7" fill="none"/>
</g></svg>
<div style="left:1455.8px;top:762.8px;width:52.7px;height:22.2px;background:#5b990b;border-radius:11.1px;"></div>
<div style="left:55.5px;top:794px;width:1507.5px;height:41px;background:#ffffff;"></div>
<div style="left:96px;top:794px;width:1px;height:41px;background:#fbfbfb;"></div>
<div style="left:97px;top:794px;width:1px;height:41px;background:#f1f1f1;"></div>
<div style="left:740px;top:794px;width:1px;height:41px;background:#fbfbfb;"></div>
<div style="left:741px;top:794px;width:1px;height:41px;background:#f1f1f1;"></div>
<div style="left:961px;top:794px;width:1px;height:41px;background:#fbfbfb;"></div>
<div style="left:962px;top:794px;width:1px;height:41px;background:#f1f1f1;"></div>
<div style="left:1118.5px;top:794px;width:1px;height:41px;background:#fbfbfb;"></div>
<div style="left:1119.5px;top:794px;width:1px;height:41px;background:#f1f1f1;"></div>
<div style="left:1280px;top:794px;width:1px;height:41px;background:#fbfbfb;"></div>
<div style="left:1281px;top:794px;width:1px;height:41px;background:#f1f1f1;"></div>
<div style="left:1444px;top:794px;width:1px;height:41px;background:#fbfbfb;"></div>
<div style="left:1445px;top:794px;width:1px;height:41px;background:#f1f1f1;"></div>
<svg style="left:36.5px;top:805.8px;" width="8" height="15" viewBox="0 0 8 15" fill="none"><rect x="0" y="0" width="2.4" height="2.4" rx="0.4" fill="#404040"/><rect x="5.1" y="0" width="2.4" height="2.4" rx="0.4" fill="#404040"/><rect x="0" y="6.05" width="2.4" height="2.4" rx="0.4" fill="#404040"/><rect x="5.1" y="6.05" width="2.4" height="2.4" rx="0.4" fill="#404040"/><rect x="0" y="12.1" width="2.4" height="2.4" rx="0.4" fill="#404040"/><rect x="5.1" y="12.1" width="2.4" height="2.4" rx="0.4" fill="#404040"/></svg>
<div style="left:520.3px;top:803.9px;width:127.5px;height:22.2px;background:#e6de80;border-radius:11.1px;"></div>
<svg style="left:1296.4px;top:799.1px;" width="32" height="32" viewBox="0 0 32 32" fill="none"><circle cx="16" cy="16" r="15.3" fill="#ffffff" stroke="#ededed" stroke-width="1.3"/>
<path d="M12.8 13.3 C13.8 10.7 16 9.4 18.2 9.4 C20.8 9.400 22.400 11.2 23.000 13.4 C25.600 14.300 27.900 16.200 27.900 18.400 C27.900 20.800 26.200 22.000 24.000 22.000 L18.000 22.000" stroke="#6a9af0" stroke-width="1.15" stroke-linecap="round" fill="none"/>
<path d="M19.200 18.400 H24.600 M21.900 15.700 V21.100" stroke="#262626" stroke-width="1.7"/></svg>
<div style="left:1455.8px;top:803.8px;width:52.7px;height:22.2px;background:#5b990b;border-radius:11.1px;"></div>
<div style="left:55.5px;top:835px;width:1507.5px;height:41px;background:#ffffff;"></div>
<div style="left:96px;top:835px;width:1px;height:41px;background:#fbfbfb;"></div>
<div style="left:97px;top:835px;width:1px;height:41px;background:#f1f1f1;"></div>
<div style="left:740px;top:835px;width:1px;height:41px;background:#fbfbfb;"></div>
<div style="left:741px;top:835px;width:1px;height:41px;background:#f1f1f1;"></div>
<div style="left:961px;top:835px;width:1px;height:41px;background:#fbfbfb;"></div>
<div style="left:962px;top:835px;width:1px;height:41px;background:#f1f1f1;"></div>
<div style="left:1118.5px;top:835px;width:1px;height:41px;background:#fbfbfb;"></div>
<div style="left:1119.5px;top:835px;width:1px;height:41px;background:#f1f1f1;"></div>
<div style="left:1280px;top:835px;width:1px;height:41px;background:#fbfbfb;"></div>
<div style="left:1281px;top:835px;width:1px;height:41px;background:#f1f1f1;"></div>
<div style="left:1444px;top:835px;width:1px;height:41px;background:#fbfbfb;"></div>
<div style="left:1445px;top:835px;width:1px;height:41px;background:#f1f1f1;"></div>
<svg style="left:36.5px;top:846.8px;" width="8" height="15" viewBox="0 0 8 15" fill="none"><rect x="0" y="0" width="2.4" height="2.4" rx="0.4" fill="#404040"/><rect x="5.1" y="0" width="2.4" height="2.4" rx="0.4" fill="#404040"/><rect x="0" y="6.05" width="2.4" height="2.4" rx="0.4" fill="#404040"/><rect x="5.1" y="6.05" width="2.4" height="2.4" rx="0.4" fill="#404040"/><rect x="0" y="12.1" width="2.4" height="2.4" rx="0.4" fill="#404040"/><rect x="5.1" y="12.1" width="2.4" height="2.4" rx="0.4" fill="#404040"/></svg>
<div style="left:520.3px;top:844.9px;width:127.5px;height:22.2px;background:#e6de80;border-radius:11.1px;"></div>
<svg style="left:1296.4px;top:840.1px;" width="32" height="32" viewBox="0 0 32 32" fill="none"><circle cx="16" cy="16" r="15.3" fill="#ffffff" stroke="#ededed" stroke-width="1.3"/>
<path d="M12.8 13.3 C13.8 10.7 16 9.4 18.2 9.4 C20.8 9.400 22.400 11.2 23.000 13.4 C25.600 14.300 27.900 16.200 27.900 18.400 C27.900 20.800 26.200 22.000 24.000 22.000 L18.000 22.000" stroke="#6a9af0" stroke-width="1.15" stroke-linecap="round" fill="none"/>
<path d="M19.200 18.400 H24.600 M21.900 15.700 V21.100" stroke="#262626" stroke-width="1.7"/></svg>
<div style="left:1455.8px;top:844.8px;width:52.7px;height:22.2px;background:#5b990b;border-radius:11.1px;"></div>
<div style="left:55.5px;top:876px;width:1507.5px;height:41px;background:#ffffff;"></div>
<div style="left:96px;top:876px;width:1px;height:41px;background:#fbfbfb;"></div>
<div style="left:97px;top:876px;width:1px;height:41px;background:#f1f1f1;"></div>
<div style="left:740px;top:876px;width:1px;height:41px;background:#fbfbfb;"></div>
<div style="left:741px;top:876px;width:1px;height:41px;background:#f1f1f1;"></div>
<div style="left:961px;top:876px;width:1px;height:41px;background:#fbfbfb;"></div>
<div style="left:962px;top:876px;width:1px;height:41px;background:#f1f1f1;"></div>
<div style="left:1118.5px;top:876px;width:1px;height:41px;background:#fbfbfb;"></div>
<div style="left:1119.5px;top:876px;width:1px;height:41px;background:#f1f1f1;"></div>
<div style="left:1280px;top:876px;width:1px;height:41px;background:#fbfbfb;"></div>
<div style="left:1281px;top:876px;width:1px;height:41px;background:#f1f1f1;"></div>
<div style="left:1444px;top:876px;width:1px;height:41px;background:#fbfbfb;"></div>
<div style="left:1445px;top:876px;width:1px;height:41px;background:#f1f1f1;"></div>
<svg style="left:36.5px;top:887.8px;" width="8" height="15" viewBox="0 0 8 15" fill="none"><rect x="0" y="0" width="2.4" height="2.4" rx="0.4" fill="#404040"/><rect x="5.1" y="0" width="2.4" height="2.4" rx="0.4" fill="#404040"/><rect x="0" y="6.05" width="2.4" height="2.4" rx="0.4" fill="#404040"/><rect x="5.1" y="6.05" width="2.4" height="2.4" rx="0.4" fill="#404040"/><rect x="0" y="12.1" width="2.4" height="2.4" rx="0.4" fill="#404040"/><rect x="5.1" y="12.1" width="2.4" height="2.4" rx="0.4" fill="#404040"/></svg>
<div style="left:520.3px;top:885.9px;width:127.5px;height:22.2px;background:#e6de80;border-radius:11.1px;"></div>
<svg style="left:1296.4px;top:881.1px;" width="32" height="32" viewBox="0 0 32 32" fill="none">
<defs><clipPath id="cf881"><circle cx="16" cy="16" r="14.6"/></clipPath>
<radialGradient id="sk881" cx="0.45" cy="0.5" r="0.62"><stop offset="0" stop-color="#cf9f68"/><stop offset="0.65" stop-color="#bb8a52"/><stop offset="1" stop-color="#9d6e3c"/></radialGradient></defs>
<circle cx="16" cy="16" r="15.3" fill="#ffffff" stroke="#ededed" stroke-width="1.3"/>
<g clip-path="url(#cf881)">
<path d="M4 32 C5 25.6 9.6 23 15.4 22.6 C22 22.8 27 24.8 28.6 32 Z" fill="#eef1fc"/>
<path d="M22 21.6 L24.2 22.2 L23.8 28.4 L21.6 28 Z" fill="#7474b4"/>
<path d="M12.6 26.6 L18.6 26.6 L19.8 29.4 L11.6 29.4 Z" fill="#2a1f9a"/>
<path d="M9.6 26.8 L11.8 26.2 L11.4 27.6 Z" fill="#4b48a8"/>
<path d="M7.2 12 C7.2 7 10.4 3.4 15 3.4 C19.8 3.4 23 7 23 12 C23 14.2 22.8 16.4 22.2 18.4 C21.4 21.2 18.4 24.1 15.2 24.1 C12 24.1 9 21.2 8 18.4 C7.4 16.4 7.2 14.2 7.2 12 Z" fill="url(#sk881)"/>
<path d="M7 14.6 C5.8 7 9.2 2.2 15 2.2 C21 2.2 24.400 6.600 23.3 14 C23 10.8 22 8.4 20 7.4 C17 8.2 11.800 7.600 9.200 9 C8 10.400 7.600 12.600 7 14.600 Z" fill="#15171a"/>
<path d="M10.800 20.5 C12.800 21.700 16.400 21.700 18.400 20.300" stroke="#a25a4c" stroke-width="0.9" fill="none"/>
<path d="M9.600 13.200 H12.800 M16.200 13.200 H19.600" stroke="#4a3322" stroke-width="1.1"/>
<path d="M14.500 14 L13.900 17.400 H15.600" stroke="#a67642" stroke-width="0.7" fill="none"/>
</g></svg>
<div style="left:1455.8px;top:885.8px;width:52.7px;height:22.2px;background:#5b990b;border-radius:11.1px;"></div>
<div style="left:55.5px;top:917px;width:1507.5px;height:41px;background:#ffffff;"></div>
<div style="left:96px;top:917px;width:1px;height:41px;background:#fbfbfb;"></div>
<div style="left:97px;top:917px;width:1px;height:41px;background:#f1f1f1;"></div>
<div style="left:740px;top:917px;width:1px;height:41px;background:#fbfbfb;"></div>
<div style="left:741px;top:917px;width:1px;height:41px;background:#f1f1f1;"></div>
<div style="left:961px;top:917px;width:1px;height:41px;background:#fbfbfb;"></div>
<div style="left:962px;top:917px;width:1px;height:41px;background:#f1f1f1;"></div>
<div style="left:1118.5px;top:917px;width:1px;height:41px;background:#fbfbfb;"></div>
<div style="left:1119.5px;top:917px;width:1px;height:41px;background:#f1f1f1;"></div>
<div style="left:1280px;top:917px;width:1px;height:41px;background:#fbfbfb;"></div>
<div style="left:1281px;top:917px;width:1px;height:41px;background:#f1f1f1;"></div>
<div style="left:1444px;top:917px;width:1px;height:41px;background:#fbfbfb;"></div>
<div style="left:1445px;top:917px;width:1px;height:41px;background:#f1f1f1;"></div>
<svg style="left:36.5px;top:928.8px;" width="8" height="15" viewBox="0 0 8 15" fill="none"><rect x="0" y="0" width="2.4" height="2.4" rx="0.4" fill="#404040"/><rect x="5.1" y="0" width="2.4" height="2.4" rx="0.4" fill="#404040"/><rect x="0" y="6.05" width="2.4" height="2.4" rx="0.4" fill="#404040"/><rect x="5.1" y="6.05" width="2.4" height="2.4" rx="0.4" fill="#404040"/><rect x="0" y="12.1" width="2.4" height="2.4" rx="0.4" fill="#404040"/><rect x="5.1" y="12.1" width="2.4" height="2.4" rx="0.4" fill="#404040"/></svg>
<div style="left:520.3px;top:926.9px;width:127.5px;height:22.2px;background:#e6de80;border-radius:11.1px;"></div>
<svg style="left:1296.4px;top:922.1px;" width="32" height="32" viewBox="0 0 32 32" fill="none">
<defs><clipPath id="cf922"><circle cx="16" cy="16" r="14.6"/></clipPath>
<radialGradient id="sk922" cx="0.45" cy="0.5" r="0.62"><stop offset="0" stop-color="#cf9f68"/><stop offset="0.65" stop-color="#bb8a52"/><stop offset="1" stop-color="#9d6e3c"/></radialGradient></defs>
<circle cx="16" cy="16" r="15.3" fill="#ffffff" stroke="#ededed" stroke-width="1.3"/>
<g clip-path="url(#cf922)">
<path d="M4 32 C5 25.6 9.6 23 15.4 22.6 C22 22.8 27 24.8 28.6 32 Z" fill="#eef1fc"/>
<path d="M22 21.6 L24.2 22.2 L23.8 28.4 L21.6 28 Z" fill="#7474b4"/>
<path d="M12.6 26.6 L18.6 26.6 L19.8 29.4 L11.6 29.4 Z" fill="#2a1f9a"/>
<path d="M9.6 26.8 L11.8 26.2 L11.4 27.6 Z" fill="#4b48a8"/>
<path d="M7.2 12 C7.2 7 10.4 3.4 15 3.4 C19.8 3.4 23 7 23 12 C23 14.2 22.8 16.4 22.2 18.4 C21.4 21.2 18.4 24.1 15.2 24.1 C12 24.1 9 21.2 8 18.4 C7.4 16.4 7.2 14.2 7.2 12 Z" fill="url(#sk922)"/>
<path d="M7 14.6 C5.8 7 9.2 2.2 15 2.2 C21 2.2 24.400 6.600 23.3 14 C23 10.8 22 8.4 20 7.4 C17 8.2 11.800 7.600 9.200 9 C8 10.400 7.600 12.600 7 14.600 Z" fill="#15171a"/>
<path d="M10.800 20.5 C12.800 21.700 16.400 21.700 18.400 20.300" stroke="#a25a4c" stroke-width="0.9" fill="none"/>
<path d="M9.600 13.200 H12.800 M16.200 13.200 H19.600" stroke="#4a3322" stroke-width="1.1"/>
<path d="M14.500 14 L13.900 17.400 H15.600" stroke="#a67642" stroke-width="0.7" fill="none"/>
</g></svg>
<div style="left:1455.8px;top:926.8px;width:52.7px;height:22.2px;background:#5b990b;border-radius:11.1px;"></div>
<div style="left:55.5px;top:958px;width:1507.5px;height:41px;background:#ffffff;"></div>
<div style="left:96px;top:958px;width:1px;height:41px;background:#fbfbfb;"></div>
<div style="left:97px;top:958px;width:1px;height:41px;background:#f1f1f1;"></div>
<div style="left:740px;top:958px;width:1px;height:41px;background:#fbfbfb;"></div>
<div style="left:741px;top:958px;width:1px;height:41px;background:#f1f1f1;"></div>
<div style="left:961px;top:958px;width:1px;height:41px;background:#fbfbfb;"></div>
<div style="left:962px;top:958px;width:1px;height:41px;background:#f1f1f1;"></div>
<div style="left:1118.5px;top:958px;width:1px;height:41px;background:#fbfbfb;"></div>
<div style="left:1119.5px;top:958px;width:1px;height:41px;background:#f1f1f1;"></div>
<div style="left:1280px;top:958px;width:1px;height:41px;background:#fbfbfb;"></div>
<div style="left:1281px;top:958px;width:1px;height:41px;background:#f1f1f1;"></div>
<div style="left:1444px;top:958px;width:1px;height:41px;background:#fbfbfb;"></div>
<div style="left:1445px;top:958px;width:1px;height:41px;background:#f1f1f1;"></div>
<svg style="left:36.5px;top:969.8px;" width="8" height="15" viewBox="0 0 8 15" fill="none"><rect x="0" y="0" width="2.4" height="2.4" rx="0.4" fill="#404040"/><rect x="5.1" y="0" width="2.4" height="2.4" rx="0.4" fill="#404040"/><rect x="0" y="6.05" width="2.4" height="2.4" rx="0.4" fill="#404040"/><rect x="5.1" y="6.05" width="2.4" height="2.4" rx="0.4" fill="#404040"/><rect x="0" y="12.1" width="2.4" height="2.4" rx="0.4" fill="#404040"/><rect x="5.1" y="12.1" width="2.4" height="2.4" rx="0.4" fill="#404040"/></svg>
<div style="left:520.3px;top:967.9px;width:127.5px;height:22.2px;background:#e6de80;border-radius:11.1px;"></div>
<svg style="left:1296.4px;top:963.1px;" width="32" height="32" viewBox="0 0 32 32" fill="none"><circle cx="16" cy="16" r="15.7" fill="#f5f2ed"/><circle cx="16" cy="16" r="14.7" fill="#5b8bda"/></svg>
<div style="left:1455.8px;top:967.8px;width:52.7px;height:22.2px;background:#5b990b;border-radius:11.1px;"></div>
<div style="left:55.5px;top:999px;width:1507.5px;height:41px;background:#ffffff;"></div>
<div style="left:96px;top:999px;width:1px;height:41px;background:#fbfbfb;"></div>
<div style="left:97px;top:999px;width:1px;height:41px;background:#f1f1f1;"></div>
<div style="left:740px;top:999px;width:1px;height:41px;background:#fbfbfb;"></div>
<div style="left:741px;top:999px;width:1px;height:41px;background:#f1f1f1;"></div>
<div style="left:961px;top:999px;width:1px;height:41px;background:#fbfbfb;"></div>
<div style="left:962px;top:999px;width:1px;height:41px;background:#f1f1f1;"></div>
<div style="left:1118.5px;top:999px;width:1px;height:41px;background:#fbfbfb;"></div>
<div style="left:1119.5px;top:999px;width:1px;height:41px;background:#f1f1f1;"></div>
<div style="left:1280px;top:999px;width:1px;height:41px;background:#fbfbfb;"></div>
<div style="left:1281px;top:999px;width:1px;height:41px;background:#f1f1f1;"></div>
<div style="left:1444px;top:999px;width:1px;height:41px;background:#fbfbfb;"></div>
<div style="left:1445px;top:999px;width:1px;height:41px;background:#f1f1f1;"></div>
<svg style="left:36.5px;top:1010.8px;" width="8" height="15" viewBox="0 0 8 15" fill="none"><rect x="0" y="0" width="2.4" height="2.4" rx="0.4" fill="#404040"/><rect x="5.1" y="0" width="2.4" height="2.4" rx="0.4" fill="#404040"/><rect x="0" y="6.05" width="2.4" height="2.4" rx="0.4" fill="#404040"/><rect x="5.1" y="6.05" width="2.4" height="2.4" rx="0.4" fill="#404040"/><rect x="0" y="12.1" width="2.4" height="2.4" rx="0.4" fill="#404040"/><rect x="5.1" y="12.1" width="2.4" height="2.4" rx="0.4" fill="#404040"/></svg>
<div style="left:520.3px;top:1008.9px;width:127.5px;height:22.2px;background:#e6de80;border-radius:11.1px;"></div>
<svg style="left:1296.4px;top:1004.1px;" width="32" height="32" viewBox="0 0 32 32" fill="none"><circle cx="16" cy="16" r="15.3" fill="#ffffff" stroke="#ededed" stroke-width="1.3"/>
<path d="M12.8 13.3 C13.8 10.7 16 9.4 18.2 9.4 C20.8 9.400 22.400 11.2 23.000 13.4 C25.600 14.300 27.900 16.200 27.900 18.400 C27.900 20.800 26.200 22.000 24.000 22.000 L18.000 22.000" stroke="#6a9af0" stroke-width="1.15" stroke-linecap="round" fill="none"/>
<path d="M19.200 18.400 H24.600 M21.900 15.700 V21.100" stroke="#262626" stroke-width="1.7"/></svg>
<div style="left:1455.8px;top:1008.8px;width:52.7px;height:22.2px;background:#5b990b;border-radius:11.1px;"></div>
<div style="left:55.5px;top:1040px;width:1507.5px;height:41px;background:#ffffff;"></div>
<div style="left:96px;top:1040px;width:1px;height:41px;background:#fbfbfb;"></div>
<div style="left:97px;top:1040px;width:1px;height:41px;background:#f1f1f1;"></div>
<div style="left:740px;top:1040px;width:1px;height:41px;background:#fbfbfb;"></div>
<div style="left:741px;top:1040px;width:1px;height:41px;background:#f1f1f1;"></div>
<div style="left:961px;top:1040px;width:1px;height:41px;background:#fbfbfb;"></div>
<div style="left:962px;top:1040px;width:1px;height:41px;background:#f1f1f1;"></div>
<div style="left:1118.5px;top:1040px;width:1px;height:41px;background:#fbfbfb;"></div>
<div style="left:1119.5px;top:1040px;width:1px;height:41px;background:#f1f1f1;"></div>
<div style="left:1280px;top:1040px;width:1px;height:41px;background:#fbfbfb;"></div>
<div style="left:1281px;top:1040px;width:1px;height:41px;background:#f1f1f1;"></div>
<div style="left:1444px;top:1040px;width:1px;height:41px;background:#fbfbfb;"></div>
<div style="left:1445px;top:1040px;width:1px;height:41px;background:#f1f1f1;"></div>
<svg style="left:36.5px;top:1051.8px;" width="8" height="15" viewBox="0 0 8 15" fill="none"><rect x="0" y="0" width="2.4" height="2.4" rx="0.4" fill="#404040"/><rect x="5.1" y="0" width="2.4" height="2.4" rx="0.4" fill="#404040"/><rect x="0" y="6.05" width="2.4" height="2.4" rx="0.4" fill="#404040"/><rect x="5.1" y="6.05" width="2.4" height="2.4" rx="0.4" fill="#404040"/><rect x="0" y="12.1" width="2.4" height="2.4" rx="0.4" fill="#404040"/><rect x="5.1" y="12.1" width="2.4" height="2.4" rx="0.4" fill="#404040"/></svg>
<div style="left:520.3px;top:1049.9px;width:127.5px;height:22.2px;background:#e6de80;border-radius:11.1px;"></div>
<svg style="left:1296.4px;top:1045.1px;" width="32" height="32" viewBox="0 0 32 32" fill="none"><circle cx="16" cy="16" r="15.3" fill="#ffffff" stroke="#ededed" stroke-width="1.3"/>
<path d="M12.8 13.3 C13.8 10.7 16 9.4 18.2 9.4 C20.8 9.400 22.400 11.2 23.000 13.4 C25.600 14.300 27.900 16.200 27.900 18.400 C27.900 20.800 26.200 22.000 24.000 22.000 L18.000 22.000" stroke="#6a9af0" stroke-width="1.15" stroke-linecap="round" fill="none"/>
<path d="M19.200 18.400 H24.600 M21.900 15.700 V21.100" stroke="#262626" stroke-width="1.7"/></svg>
<div style="left:1455.8px;top:1049.8px;width:52.7px;height:22.2px;background:#5b990b;border-radius:11.1px;"></div>
<div style="left:55.5px;top:1081px;width:1507.5px;height:41px;background:#ffffff;"></div>
<div style="left:96px;top:1081px;width:1px;height:41px;background:#fbfbfb;"></div>
<div style="left:97px;top:1081px;width:1px;height:41px;background:#f1f1f1;"></div>
<div style="left:740px;top:1081px;width:1px;height:41px;background:#fbfbfb;"></div>
<div style="left:741px;top:1081px;width:1px;height:41px;background:#f1f1f1;"></div>
<div style="left:961px;top:1081px;width:1px;height:41px;background:#fbfbfb;"></div>
<div style="left:962px;top:1081px;width:1px;height:41px;background:#f1f1f1;"></div>
<div style="left:1118.5px;top:1081px;width:1px;height:41px;background:#fbfbfb;"></div>
<div style="left:1119.5px;top:1081px;width:1px;height:41px;background:#f1f1f1;"></div>
<div style="left:1280px;top:1081px;width:1px;height:41px;background:#fbfbfb;"></div>
<div style="left:1281px;top:1081px;width:1px;height:41px;background:#f1f1f1;"></div>
<div style="left:1444px;top:1081px;width:1px;height:41px;background:#fbfbfb;"></div>
<div style="left:1445px;top:1081px;width:1px;height:41px;background:#f1f1f1;"></div>
<svg style="left:36.5px;top:1092.8px;" width="8" height="15" viewBox="0 0 8 15" fill="none"><rect x="0" y="0" width="2.4" height="2.4" rx="0.4" fill="#404040"/><rect x="5.1" y="0" width="2.4" height="2.4" rx="0.4" fill="#404040"/><rect x="0" y="6.05" width="2.4" height="2.4" rx="0.4" fill="#404040"/><rect x="5.1" y="6.05" width="2.4" height="2.4" rx="0.4" fill="#404040"/><rect x="0" y="12.1" width="2.4" height="2.4" rx="0.4" fill="#404040"/><rect x="5.1" y="12.1" width="2.4" height="2.4" rx="0.4" fill="#404040"/></svg>
<div style="left:520.3px;top:1090.9px;width:127.5px;height:22.2px;background:#e6de80;border-radius:11.1px;"></div>
<svg style="left:1296.4px;top:1086.1px;" width="32" height="32" viewBox="0 0 32 32" fill="none"><circle cx="16" cy="16" r="15.3" fill="#ffffff" stroke="#ededed" stroke-width="1.3"/>
<path d="M12.8 13.3 C13.8 10.7 16 9.4 18.2 9.4 C20.8 9.400 22.400 11.2 23.000 13.4 C25.600 14.300 27.900 16.200 27.900 18.400 C27.900 20.800 26.200 22.000 24.000 22.000 L18.000 22.000" stroke="#6a9af0" stroke-width="1.15" stroke-linecap="round" fill="none"/>
<path d="M19.200 18.400 H24.600 M21.900 15.700 V21.100" stroke="#262626" stroke-width="1.7"/></svg>
<div style="left:1455.8px;top:1090.8px;width:52.7px;height:22.2px;background:#5b990b;border-radius:11.1px;"></div>
<div style="left:55.5px;top:1122px;width:1507.5px;height:41px;background:#ffffff;"></div>
<div style="left:96px;top:1122px;width:1px;height:41px;background:#fbfbfb;"></div>
<div style="left:97px;top:1122px;width:1px;height:41px;background:#f1f1f1;"></div>
<div style="left:740px;top:1122px;width:1px;height:41px;background:#fbfbfb;"></div>
<div style="left:741px;top:1122px;width:1px;height:41px;background:#f1f1f1;"></div>
<div style="left:961px;top:1122px;width:1px;height:41px;background:#fbfbfb;"></div>
<div style="left:962px;top:1122px;width:1px;height:41px;background:#f1f1f1;"></div>
<div style="left:1118.5px;top:1122px;width:1px;height:41px;background:#fbfbfb;"></div>
<div style="left:1119.5px;top:1122px;width:1px;height:41px;background:#f1f1f1;"></div>
<div style="left:1280px;top:1122px;width:1px;height:41px;background:#fbfbfb;"></div>
<div style="left:1281px;top:1122px;width:1px;height:41px;background:#f1f1f1;"></div>
<div style="left:1444px;top:1122px;width:1px;height:41px;background:#fbfbfb;"></div>
<div style="left:1445px;top:1122px;width:1px;height:41px;background:#f1f1f1;"></div>
<svg style="left:36.5px;top:1133.8px;" width="8" height="15" viewBox="0 0 8 15" fill="none"><rect x="0" y="0" width="2.4" height="2.4" rx="0.4" fill="#404040"/><rect x="5.1" y="0" width="2.4" height="2.4" rx="0.4" fill="#404040"/><rect x="0" y="6.05" width="2.4" height="2.4" rx="0.4" fill="#404040"/><rect x="5.1" y="6.05" width="2.4" height="2.4" rx="0.4" fill="#404040"/><rect x="0" y="12.1" width="2.4" height="2.4" rx="0.4" fill="#404040"/><rect x="5.1" y="12.1" width="2.4" height="2.4" rx="0.4" fill="#404040"/></svg>
<div style="left:520.3px;top:1131.9px;width:127.5px;height:22.2px;background:#e6de80;border-radius:11.1px;"></div>
<svg style="left:1296.4px;top:1127.1px;" width="32" height="32" viewBox="0 0 32 32" fill="none"><circle cx="16" cy="16" r="15.7" fill="#f5f2ed"/><circle cx="16" cy="16" r="14.7" fill="#5b8bda"/></svg>
<div style="left:1455.8px;top:1131.8px;width:52.7px;height:22.2px;background:#5b990b;border-radius:11.1px;"></div>
<div style="left:55.5px;top:1163px;width:1507.5px;height:41px;background:#ffffff;"></div>
<div style="left:96px;top:1163px;width:1px;height:41px;background:#fbfbfb;"></div>
<div style="left:97px;top:1163px;width:1px;height:41px;background:#f1f1f1;"></div>
<div style="left:740px;top:1163px;width:1px;height:41px;background:#fbfbfb;"></div>
<div style="left:741px;top:1163px;width:1px;height:41px;background:#f1f1f1;"></div>
<div style="left:961px;top:1163px;width:1px;height:41px;background:#fbfbfb;"></div>
<div style="left:962px;top:1163px;width:1px;height:41px;background:#f1f1f1;"></div>
<div style="left:1118.5px;top:1163px;width:1px;height:41px;background:#fbfbfb;"></div>
<div style="left:1119.5px;top:1163px;width:1px;height:41px;background:#f1f1f1;"></div>
<div style="left:1280px;top:1163px;width:1px;height:41px;background:#fbfbfb;"></div>
<div style="left:1281px;top:1163px;width:1px;height:41px;background:#f1f1f1;"></div>
<div style="left:1444px;top:1163px;width:1px;height:41px;background:#fbfbfb;"></div>
<div style="left:1445px;top:1163px;width:1px;height:41px;background:#f1f1f1;"></div>
<svg style="left:36.5px;top:1174.8px;" width="8" height="15" viewBox="0 0 8 15" fill="none"><rect x="0" y="0" width="2.4" height="2.4" rx="0.4" fill="#404040"/><rect x="5.1" y="0" width="2.4" height="2.4" rx="0.4" fill="#404040"/><rect x="0" y="6.05" width="2.4" height="2.4" rx="0.4" fill="#404040"/><rect x="5.1" y="6.05" width="2.4" height="2.4" rx="0.4" fill="#404040"/><rect x="0" y="12.1" width="2.4" height="2.4" rx="0.4" fill="#404040"/><rect x="5.1" y="12.1" width="2.4" height="2.4" rx="0.4" fill="#404040"/></svg>
<div style="left:520.3px;top:1172.9px;width:127.5px;height:22.2px;background:#e6de80;border-radius:11.1px;"></div>
<svg style="left:1296.4px;top:1168.1px;" width="32" height="32" viewBox="0 0 32 32" fill="none"><circle cx="16" cy="16" r="15.7" fill="#f5f2ed"/><circle cx="16" cy="16" r="14.7" fill="#5b8bda"/></svg>
<div style="left:1455.8px;top:1172.8px;width:52.7px;height:22.2px;background:#5b990b;border-radius:11.1px;"></div>
<div style="left:55.5px;top:1204px;width:1507.5px;height:41px;background:#ffffff;"></div>
<div style="left:96px;top:1204px;width:1px;height:41px;background:#fbfbfb;"></div>
<div style="left:97px;top:1204px;width:1px;height:41px;background:#f1f1f1;"></div>
<div style="left:740px;top:1204px;width:1px;height:41px;background:#fbfbfb;"></div>
<div style="left:741px;top:1204px;width:1px;height:41px;background:#f1f1f1;"></div>
<div style="left:961px;top:1204px;width:1px;height:41px;background:#fbfbfb;"></div>
<div style="left:962px;top:1204px;width:1px;height:41px;background:#f1f1f1;"></div>
<div style="left:1118.5px;top:1204px;width:1px;height:41px;background:#fbfbfb;"></div>
<div style="left:1119.5px;top:1204px;width:1px;height:41px;background:#f1f1f1;"></div>
<div style="left:1280px;top:1204px;width:1px;height:41px;background:#fbfbfb;"></div>
<div style="left:1281px;top:1204px;width:1px;height:41px;background:#f1f1f1;"></div>
<div style="left:1444px;top:1204px;width:1px;height:41px;background:#fbfbfb;"></div>
<div style="left:1445px;top:1204px;width:1px;height:41px;background:#f1f1f1;"></div>
<svg style="left:36.5px;top:1215.8px;" width="8" height="15" viewBox="0 0 8 15" fill="none"><rect x="0" y="0" width="2.4" height="2.4" rx="0.4" fill="#404040"/><rect x="5.1" y="0" width="2.4" height="2.4" rx="0.4" fill="#404040"/><rect x="0" y="6.05" width="2.4" height="2.4" rx="0.4" fill="#404040"/><rect x="5.1" y="6.05" width="2.4" height="2.4" rx="0.4" fill="#404040"/><rect x="0" y="12.1" width="2.4" height="2.4" rx="0.4" fill="#404040"/><rect x="5.1" y="12.1" width="2.4" height="2.4" rx="0.4" fill="#404040"/></svg>
<div style="left:520.3px;top:1213.9px;width:127.5px;height:22.2px;background:#e6de80;border-radius:11.1px;"></div>
<svg style="left:1296.4px;top:1209.1px;" width="32" height="32" viewBox="0 0 32 32" fill="none"><circle cx="16" cy="16" r="15.7" fill="#f5f2ed"/><circle cx="16" cy="16" r="14.7" fill="#5b8bda"/></svg>
<div style="left:1455.8px;top:1213.8px;width:52.7px;height:22.2px;background:#5b990b;border-radius:11.1px;"></div>
<div style="left:55.5px;top:1245px;width:1507.5px;height:41px;background:#ffffff;"></div>
<div style="left:96px;top:1245px;width:1px;height:41px;background:#fbfbfb;"></div>
<div style="left:97px;top:1245px;width:1px;height:41px;background:#f1f1f1;"></div>
<div style="left:740px;top:1245px;width:1px;height:41px;background:#fbfbfb;"></div>
<div style="left:741px;top:1245px;width:1px;height:41px;background:#f1f1f1;"></div>
<div style="left:961px;top:1245px;width:1px;height:41px;background:#fbfbfb;"></div>
<div style="left:962px;top:1245px;width:1px;height:41px;background:#f1f1f1;"></div>
<div style="left:1118.5px;top:1245px;width:1px;height:41px;background:#fbfbfb;"></div>
<div style="left:1119.5px;top:1245px;width:1px;height:41px;background:#f1f1f1;"></div>
<div style="left:1280px;top:1245px;width:1px;height:41px;background:#fbfbfb;"></div>
<div style="left:1281px;top:1245px;width:1px;height:41px;background:#f1f1f1;"></div>
<div style="left:1444px;top:1245px;width:1px;height:41px;background:#fbfbfb;"></div>
<div style="left:1445px;top:1245px;width:1px;height:41px;background:#f1f1f1;"></div>
<svg style="left:36.5px;top:1256.8px;" width="8" height="15" viewBox="0 0 8 15" fill="none"><rect x="0" y="0" width="2.4" height="2.4" rx="0.4" fill="#404040"/><rect x="5.1" y="0" width="2.4" height="2.4" rx="0.4" fill="#404040"/><rect x="0" y="6.05" width="2.4" height="2.4" rx="0.4" fill="#404040"/><rect x="5.1" y="6.05" width="2.4" height="2.4" rx="0.4" fill="#404040"/><rect x="0" y="12.1" width="2.4" height="2.4" rx="0.4" fill="#404040"/><rect x="5.1" y="12.1" width="2.4" height="2.4" rx="0.4" fill="#404040"/></svg>
<div style="left:520.3px;top:1254.9px;width:127.5px;height:22.2px;background:#e6de80;border-radius:11.1px;"></div>
<svg style="left:1296.4px;top:1250.1px;" width="32" height="32" viewBox="0 0 32 32" fill="none"><circle cx="16" cy="16" r="15.7" fill="#f5f2ed"/><circle cx="16" cy="16" r="14.7" fill="#5b8bda"/></svg>
<div style="left:1455.8px;top:1254.8px;width:52.7px;height:22.2px;background:#5b990b;border-radius:11.1px;"></div>
<div style="left:55.5px;top:670px;width:1507.5px;height:1px;background:#f7f7f7;"></div>
<div style="left:55.5px;top:671px;width:1507.5px;height:1px;background:#f4f4f4;"></div>
<div style="left:55.5px;top:711px;width:1507.5px;height:1px;background:#f7f7f7;"></div>
<div style="left:55.5px;top:712px;width:1507.5px;height:1px;background:#f4f4f4;"></div>
<div style="left:55.5px;top:752px;width:1507.5px;height:1px;background:#f7f7f7;"></div>
<div style="left:55.5px;top:753px;width:1507.5px;height:1px;background:#f4f4f4;"></div>
<div style="left:55.5px;top:793px;width:1507.5px;height:1px;background:#f7f7f7;"></div>
<div style="left:55.5px;top:794px;width:1507.5px;height:1px;background:#f4f4f4;"></div>
<div style="left:55.5px;top:834px;width:1507.5px;height:1px;background:#f7f7f7;"></div>
<div style="left:55.5px;top:835px;width:1507.5px;height:1px;background:#f4f4f4;"></div>
<div style="left:55.5px;top:875px;width:1507.5px;height:1px;background:#f7f7f7;"></div>
<div style="left:55.5px;top:876px;width:1507.5px;height:1px;background:#f4f4f4;"></div>
<div style="left:55.5px;top:916px;width:1507.5px;height:1px;background:#f7f7f7;"></div>
<div style="left:55.5px;top:917px;width:1507.5px;height:1px;background:#f4f4f4;"></div>
<div style="left:55.5px;top:957px;width:1507.5px;height:1px;background:#f7f7f7;"></div>
<div style="left:55.5px;top:958px;width:1507.5px;height:1px;background:#f4f4f4;"></div>
<div style="left:55.5px;top:998px;width:1507.5px;height:1px;background:#f7f7f7;"></div>
<div style="left:55.5px;top:999px;width:1507.5px;height:1px;background:#f4f4f4;"></div>
<div style="left:55.5px;top:1039px;width:1507.5px;height:1px;background:#f7f7f7;"></div>
<div style="left:55.5px;top:1040px;width:1507.5px;height:1px;background:#f4f4f4;"></div>
<div style="left:55.5px;top:1080px;width:1507.5px;height:1px;background:#f7f7f7;"></div>
<div style="left:55.5px;top:1081px;width:1507.5px;height:1px;background:#f4f4f4;"></div>
<div style="left:55.5px;top:1121px;width:1507.5px;height:1px;background:#f7f7f7;"></div>
<div style="left:55.5px;top:1122px;width:1507.5px;height:1px;background:#f4f4f4;"></div>
<div style="left:55.5px;top:1162px;width:1507.5px;height:1px;background:#f7f7f7;"></div>
<div style="left:55.5px;top:1163px;width:1507.5px;height:1px;background:#f4f4f4;"></div>
<div style="left:55.5px;top:1203px;width:1507.5px;height:1px;background:#f7f7f7;"></div>
<div style="left:55.5px;top:1204px;width:1507.5px;height:1px;background:#f4f4f4;"></div>
<div style="left:55.5px;top:1244px;width:1507.5px;height:1px;background:#f7f7f7;"></div>
<div style="left:55.5px;top:1245px;width:1507.5px;height:1px;background:#f4f4f4;"></div>
<div style="left:55.5px;top:1285px;width:1507.5px;height:1px;background:#f7f7f7;"></div>
<div style="left:55.5px;top:1286px;width:1507.5px;height:1px;background:#f4f4f4;"></div>
<div style="left:510.4px;top:589.5px;width:7px;height:696.5px;background:linear-gradient(to right,rgba(110,110,125,.17),rgba(110,110,125,.07) 50%,rgba(110,110,125,0));"></div>
<svg style="left:434.2px;top:385px;" width="63" height="35" viewBox="0 0 63 35" fill="none">
<path d="M17.5 1 H45.5 A16.5 16.5 0 0 1 45.5 34 H1.2 V17.5 A16.5 16.5 0 0 1 17.5 1 Z" fill="#ffffff" stroke="#dcd9ea" stroke-width="1.1"/>
<path d="M17.2 8.4 C21.8 8.4 25.4 11.8 25.4 16.2 C25.4 19.2 23.8 21 22.6 22.4 L22 23.8 H12.4 L11.8 22.4 C10.6 21 9 19.2 9 16.2 C9 11.8 12.6 8.4 17.2 8.4 Z" fill="#45b892"/>
<path d="M13.2 25.8 H21.2 C21.2 27.6 19.6 28.6 17.2 28.6 C14.8 28.6 13.2 27.6 13.2 25.8 Z" fill="#3a9c7d"/>
<path d="M17.2 11.4 C17.7 13.9 18.9 15.2 21.6 15.9 C18.9 16.6 17.7 17.9 17.2 20.6 C16.7 17.9 15.5 16.6 12.8 15.9 C15.500 15.2 16.7 13.9 17.2 11.4 Z" fill="#ffffff"/>
<path d="M46 6 A12 12 0 1 1 46 30 H33.8 V18 A12 12 0 0 1 46 6 Z" fill="#3a8570"/>
<path d="M51.4 12.3 A7.7 7.7 0 1 0 53.7 18.2 H47.6" stroke="#ffffff" stroke-width="2" fill="none" stroke-linejoin="miter"/>
</svg>
<span style="left:816.29px;top:20.00px;font-size:15.5px;color:#ebe9f4;font-weight:700;transform:scaleX(0.7097);transform-origin:0 0;-webkit-text-stroke:0.45px #ebe9f4;">ISO</span>
<span style="left:107.10px;top:70.00px;font-size:15.8px;color:#2d2d2d;letter-spacing:0.558px;-webkit-text-stroke:0.22px currentColor;">Documents Master List</span>
<span style="left:341.70px;top:68.00px;font-size:16.6px;color:#ffffff;letter-spacing:0.037px;-webkit-text-stroke:0.3px currentColor;">Review Schedule</span>
<span style="left:531.60px;top:68.00px;font-size:16.6px;color:#ffffff;letter-spacing:0.185px;-webkit-text-stroke:0.3px currentColor;">Documents Categories</span>
<span style="left:43.80px;top:115.00px;font-size:16.6px;color:#67637f;letter-spacing:-0.060px;-webkit-text-stroke:0.22px currentColor;">Table</span>
<span style="left:131.40px;top:115.00px;font-size:16.6px;color:#67637f;letter-spacing:-0.110px;-webkit-text-stroke:0.22px currentColor;">Filter</span>
<span style="left:219.70px;top:115.00px;font-size:16.6px;color:#8cb5fb;letter-spacing:0.126px;-webkit-text-stroke:0.22px currentColor;">Grouped by Document Category</span>
<span style="left:513.50px;top:115.00px;font-size:16.6px;color:#67637f;letter-spacing:-0.207px;-webkit-text-stroke:0.22px currentColor;">Sort</span>
<span style="left:592.40px;top:115.00px;font-size:16.6px;color:#67637f;letter-spacing:0.043px;-webkit-text-stroke:0.22px currentColor;">Customize</span>
<span style="left:722.70px;top:115.00px;font-size:16.6px;color:#67637f;letter-spacing:0.140px;-webkit-text-stroke:0.22px currentColor;">Expand All</span>
<span style="left:855.70px;top:115.00px;font-size:16.6px;color:#67637f;letter-spacing:-0.768px;-webkit-text-stroke:0.22px currentColor;">AI</span>
<span style="left:915.40px;top:115.00px;font-size:16.6px;color:#67637f;letter-spacing:-0.016px;-webkit-text-stroke:0.22px currentColor;">Quick Search</span>
<span style="left:111.20px;top:192.00px;font-size:12.6px;color:#5b5876;letter-spacing:0.233px;">Governance &amp; Organisation</span>
<span style="left:308.40px;top:190.00px;font-size:15.8px;color:#4e497c;font-weight:700;">4</span>
<span style="left:128.80px;top:235.00px;font-size:13.8px;color:#454545;letter-spacing:0.536px;-webkit-text-stroke:0.22px currentColor;">Document</span>
<span style="left:541.40px;top:235.00px;font-size:13.8px;color:#454545;letter-spacing:0.431px;-webkit-text-stroke:0.22px currentColor;">Document Category</span>
<span style="left:772.40px;top:235.00px;font-size:13.8px;color:#454545;letter-spacing:0.199px;-webkit-text-stroke:0.22px currentColor;">Issue/Revision Date</span>
<span style="left:994.70px;top:235.00px;font-size:13.8px;color:#454545;letter-spacing:0.255px;-webkit-text-stroke:0.22px currentColor;">Current Revision</span>
<span style="left:1150.80px;top:235.00px;font-size:13.8px;color:#454545;letter-spacing:0.204px;-webkit-text-stroke:0.22px currentColor;">Next Review Date</span>
<span style="left:1313.10px;top:235.00px;font-size:13.8px;color:#454545;letter-spacing:0.170px;-webkit-text-stroke:0.22px currentColor;">Reviewer</span>
<span style="left:1477.30px;top:235.00px;font-size:13.8px;color:#454545;letter-spacing:0.405px;-webkit-text-stroke:0.22px currentColor;">Document Status</span>
<span style="left:71.60px;top:274.00px;font-size:16px;color:#303030;">1</span>
<span style="left:108.20px;top:274.00px;font-size:16px;color:#383838;letter-spacing:0.382px;">Corporate Governance Framework</span>
<span style="left:529.00px;top:276.00px;font-size:12.6px;color:#5b5876;letter-spacing:0.221px;">Governance &amp; Organisation</span>
<span style="left:751.60px;top:276.00px;font-size:15.3px;color:#3a3a3a;letter-spacing:0.416px;">01/07/2025</span>
<span style="left:973.00px;top:274.00px;font-size:16px;color:#343434;letter-spacing:1.202px;">00</span>
<span style="left:1129.70px;top:276.00px;font-size:15.3px;color:#3a3a3a;letter-spacing:0.528px;">07/07/2026</span>
<span style="left:1463.90px;top:277.00px;font-size:12.5px;color:#ffffff;font-weight:700;letter-spacing:-0.233px;">Active</span>
<span style="left:72.10px;top:315.00px;font-size:16px;color:#303030;">2</span>
<span style="left:108.20px;top:315.00px;font-size:16px;color:#383838;letter-spacing:0.305px;">Organisational Chart</span>
<span style="left:529.00px;top:317.00px;font-size:12.6px;color:#5b5876;letter-spacing:0.221px;">Governance &amp; Organisation</span>
<span style="left:751.60px;top:317.00px;font-size:15.3px;color:#3a3a3a;letter-spacing:0.416px;">01/07/2025</span>
<span style="left:973.00px;top:315.00px;font-size:16px;color:#343434;letter-spacing:1.202px;">00</span>
<span style="left:1129.70px;top:317.00px;font-size:15.3px;color:#3a3a3a;letter-spacing:0.528px;">07/07/2026</span>
<span style="left:1463.90px;top:318.00px;font-size:12.5px;color:#ffffff;font-weight:700;letter-spacing:-0.233px;">Active</span>
<span style="left:72.10px;top:356.00px;font-size:16px;color:#303030;">3</span>
<span style="left:107.20px;top:356.00px;font-size:16px;color:#383838;letter-spacing:0.475px;">Position Descriptions Manual</span>
<span style="left:529.00px;top:358.00px;font-size:12.6px;color:#5b5876;letter-spacing:0.221px;">Governance &amp; Organisation</span>
<span style="left:751.60px;top:358.00px;font-size:15.3px;color:#3a3a3a;letter-spacing:0.416px;">01/07/2025</span>
<span style="left:973.00px;top:356.00px;font-size:16px;color:#343434;letter-spacing:1.202px;">00</span>
<span style="left:1129.70px;top:358.00px;font-size:15.3px;color:#3a3a3a;letter-spacing:0.528px;">08/07/2026</span>
<span style="left:1463.90px;top:359.00px;font-size:12.5px;color:#ffffff;font-weight:700;letter-spacing:-0.233px;">Active</span>
<span style="left:72.10px;top:397.00px;font-size:16px;color:#303030;">4</span>
<span style="left:107.20px;top:397.00px;font-size:16px;color:#383838;letter-spacing:0.542px;">Delegation of Authority Matrix</span>
<span style="left:529.00px;top:399.00px;font-size:12.6px;color:#5b5876;letter-spacing:0.221px;">Governance &amp; Organisation</span>
<span style="left:751.60px;top:399.00px;font-size:15.3px;color:#3a3a3a;letter-spacing:0.416px;">01/07/2025</span>
<span style="left:973.00px;top:397.00px;font-size:16px;color:#343434;letter-spacing:1.202px;">00</span>
<span style="left:1129.70px;top:399.00px;font-size:15.3px;color:#3a3a3a;letter-spacing:0.528px;">08/07/2026</span>
<span style="left:1463.90px;top:400.00px;font-size:12.5px;color:#ffffff;font-weight:700;letter-spacing:-0.233px;">Active</span>
<span style="left:97.00px;top:438.00px;font-size:16.6px;color:#8cb5fb;letter-spacing:0.059px;">Add a New Item</span>
<span style="left:110.20px;top:560.00px;font-size:12.6px;color:#5b5876;letter-spacing:0.300px;">Policy &amp; Procedure</span>
<span style="left:258.71px;top:558.00px;font-size:15.8px;color:#4e497c;font-weight:700;">22</span>
<span style="left:128.80px;top:603.00px;font-size:13.8px;color:#454545;letter-spacing:0.536px;-webkit-text-stroke:0.22px currentColor;">Document</span>
<span style="left:541.40px;top:603.00px;font-size:13.8px;color:#454545;letter-spacing:0.431px;-webkit-text-stroke:0.22px currentColor;">Document Category</span>
<span style="left:772.40px;top:603.00px;font-size:13.8px;color:#454545;letter-spacing:0.199px;-webkit-text-stroke:0.22px currentColor;">Issue/Revision Date</span>
<span style="left:994.70px;top:603.00px;font-size:13.8px;color:#454545;letter-spacing:0.255px;-webkit-text-stroke:0.22px currentColor;">Current Revision</span>
<span style="left:1150.80px;top:603.00px;font-size:13.8px;color:#454545;letter-spacing:0.204px;-webkit-text-stroke:0.22px currentColor;">Next Review Date</span>
<span style="left:1313.10px;top:603.00px;font-size:13.8px;color:#454545;letter-spacing:0.170px;-webkit-text-stroke:0.22px currentColor;">Reviewer</span>
<span style="left:1477.30px;top:603.00px;font-size:13.8px;color:#454545;letter-spacing:0.405px;-webkit-text-stroke:0.22px currentColor;">Document Status</span>
<span style="left:71.60px;top:643.00px;font-size:16px;color:#303030;">1</span>
<span style="left:108.20px;top:643.00px;font-size:16px;color:#383838;letter-spacing:0.355px;">Assessment and Planning Policy and Procedure</span>
<span style="left:528.00px;top:645.00px;font-size:12.6px;color:#5b5876;letter-spacing:0.283px;">Policy &amp; Procedure</span>
<span style="left:751.60px;top:645.00px;font-size:15.3px;color:#3a3a3a;letter-spacing:0.416px;">01/07/2025</span>
<span style="left:973.00px;top:643.00px;font-size:16px;color:#343434;letter-spacing:1.202px;">00</span>
<span style="left:1129.70px;top:645.00px;font-size:15.3px;color:#3a3a3a;letter-spacing:0.528px;">09/07/2026</span>
<span style="left:1302.60px;top:644.00px;font-size:14.6px;color:#e9f0fb;letter-spacing:-0.134px;">SD</span>
<span style="left:1463.90px;top:645.00px;font-size:12.5px;color:#ffffff;font-weight:700;letter-spacing:-0.233px;">Active</span>
<span style="left:72.10px;top:684.00px;font-size:16px;color:#303030;">2</span>
<span style="left:108.20px;top:684.00px;font-size:16px;color:#383838;letter-spacing:0.443px;">Choice, Independence and Quality of Life</span>
<span style="left:528.00px;top:686.00px;font-size:12.6px;color:#5b5876;letter-spacing:0.283px;">Policy &amp; Procedure</span>
<span style="left:751.60px;top:686.00px;font-size:15.3px;color:#3a3a3a;letter-spacing:0.416px;">01/07/2025</span>
<span style="left:973.00px;top:684.00px;font-size:16px;color:#343434;letter-spacing:1.202px;">00</span>
<span style="left:1128.70px;top:686.00px;font-size:15.3px;color:#3a3a3a;letter-spacing:0.639px;">10/07/2026</span>
<span style="left:1302.60px;top:685.00px;font-size:14.6px;color:#e9f0fb;letter-spacing:-0.134px;">SD</span>
<span style="left:1463.90px;top:686.00px;font-size:12.5px;color:#ffffff;font-weight:700;letter-spacing:-0.233px;">Active</span>
<span style="left:72.10px;top:725.00px;font-size:16px;color:#303030;">3</span>
<span style="left:107.20px;top:725.00px;font-size:16px;color:#383838;letter-spacing:0.439px;width:403.2px;overflow:hidden;padding-bottom:4px;">Management of Agreements, Fees, Pricing, Invoicing and Payments</span>
<span style="left:528.00px;top:727.00px;font-size:12.6px;color:#5b5876;letter-spacing:0.283px;">Policy &amp; Procedure</span>
<span style="left:751.60px;top:727.00px;font-size:15.3px;color:#3a3a3a;letter-spacing:0.416px;">01/07/2025</span>
<span style="left:973.00px;top:725.00px;font-size:16px;color:#343434;letter-spacing:1.202px;">00</span>
<span style="left:1128.70px;top:727.00px;font-size:15.3px;color:#3a3a3a;letter-spacing:0.639px;">10/07/2026</span>
<span style="left:1302.60px;top:726.00px;font-size:14.6px;color:#e9f0fb;letter-spacing:-0.134px;">SD</span>
<span style="left:1463.90px;top:727.00px;font-size:12.5px;color:#ffffff;font-weight:700;letter-spacing:-0.233px;">Active</span>
<span style="left:72.10px;top:766.00px;font-size:16px;color:#303030;">4</span>
<span style="left:107.20px;top:766.00px;font-size:16px;color:#383838;letter-spacing:0.428px;">Managing the Home Environment</span>
<span style="left:528.00px;top:768.00px;font-size:12.6px;color:#5b5876;letter-spacing:0.283px;">Policy &amp; Procedure</span>
<span style="left:751.60px;top:768.00px;font-size:15.3px;color:#3a3a3a;letter-spacing:0.416px;">01/07/2025</span>
<span style="left:973.00px;top:766.00px;font-size:16px;color:#343434;letter-spacing:1.202px;">00</span>
<span style="left:1128.70px;top:768.00px;font-size:15.3px;color:#3a3a3a;letter-spacing:0.765px;">11/07/2026</span>
<span style="left:1463.90px;top:768.00px;font-size:12.5px;color:#ffffff;font-weight:700;letter-spacing:-0.233px;">Active</span>
<span style="left:72.10px;top:807.00px;font-size:16px;color:#303030;">5</span>
<span style="left:107.20px;top:807.00px;font-size:16px;color:#383838;letter-spacing:0.516px;">Person-centred Care</span>
<span style="left:528.00px;top:809.00px;font-size:12.6px;color:#5b5876;letter-spacing:0.283px;">Policy &amp; Procedure</span>
<span style="left:751.60px;top:809.00px;font-size:15.3px;color:#3a3a3a;letter-spacing:0.416px;">01/07/2025</span>
<span style="left:973.00px;top:807.00px;font-size:16px;color:#343434;letter-spacing:1.202px;">00</span>
<span style="left:1128.70px;top:809.00px;font-size:15.3px;color:#3a3a3a;letter-spacing:0.639px;">14/07/2026</span>
<span style="left:1300.30px;top:812.00px;font-size:11.6px;color:#cf1f1f;font-weight:700;transform:scaleX(0.7267);transform-origin:0 0;-webkit-text-stroke:0.35px #cf1f1f;">ISO</span>
<span style="left:1463.90px;top:809.00px;font-size:12.5px;color:#ffffff;font-weight:700;letter-spacing:-0.233px;">Active</span>
<span style="left:72.10px;top:848.00px;font-size:16px;color:#303030;">6</span>
<span style="left:108.20px;top:848.00px;font-size:16px;color:#383838;letter-spacing:0.376px;">Care of People Living with Dementia</span>
<span style="left:528.00px;top:850.00px;font-size:12.6px;color:#5b5876;letter-spacing:0.283px;">Policy &amp; Procedure</span>
<span style="left:751.60px;top:850.00px;font-size:15.3px;color:#3a3a3a;letter-spacing:0.416px;">01/07/2025</span>
<span style="left:973.00px;top:848.00px;font-size:16px;color:#343434;letter-spacing:1.202px;">00</span>
<span style="left:1128.70px;top:850.00px;font-size:15.3px;color:#3a3a3a;letter-spacing:0.639px;">15/07/2026</span>
<span style="left:1300.30px;top:852.00px;font-size:11.6px;color:#cf1f1f;font-weight:700;transform:scaleX(0.7267);transform-origin:0 0;-webkit-text-stroke:0.35px #cf1f1f;">ISO</span>
<span style="left:1463.90px;top:850.00px;font-size:12.5px;color:#ffffff;font-weight:700;letter-spacing:-0.233px;">Active</span>
<span style="left:72.10px;top:889.00px;font-size:16px;color:#303030;">7</span>
<span style="left:108.20px;top:889.00px;font-size:16px;color:#383838;letter-spacing:0.477px;">Communication and Coordination</span>
<span style="left:528.00px;top:891.00px;font-size:12.6px;color:#5b5876;letter-spacing:0.283px;">Policy &amp; Procedure</span>
<span style="left:751.60px;top:891.00px;font-size:15.3px;color:#3a3a3a;letter-spacing:0.416px;">01/07/2025</span>
<span style="left:973.00px;top:889.00px;font-size:16px;color:#343434;letter-spacing:1.202px;">00</span>
<span style="left:1128.70px;top:891.00px;font-size:15.3px;color:#3a3a3a;letter-spacing:0.639px;">15/07/2026</span>
<span style="left:1463.90px;top:891.00px;font-size:12.5px;color:#ffffff;font-weight:700;letter-spacing:-0.233px;">Active</span>
<span style="left:72.10px;top:930.00px;font-size:16px;color:#303030;">8</span>
<span style="left:107.20px;top:930.00px;font-size:16px;color:#383838;letter-spacing:0.403px;">Delivery of Clinical Care</span>
<span style="left:528.00px;top:932.00px;font-size:12.6px;color:#5b5876;letter-spacing:0.283px;">Policy &amp; Procedure</span>
<span style="left:751.60px;top:932.00px;font-size:15.3px;color:#3a3a3a;letter-spacing:0.416px;">01/07/2025</span>
<span style="left:973.00px;top:930.00px;font-size:16px;color:#343434;letter-spacing:1.202px;">00</span>
<span style="left:1128.70px;top:932.00px;font-size:15.3px;color:#3a3a3a;letter-spacing:0.639px;">16/07/2026</span>
<span style="left:1463.90px;top:932.00px;font-size:12.5px;color:#ffffff;font-weight:700;letter-spacing:-0.233px;">Active</span>
<span style="left:72.10px;top:971.00px;font-size:16px;color:#303030;">9</span>
<span style="left:107.20px;top:971.00px;font-size:16px;color:#383838;letter-spacing:0.491px;">Delivery of Non-clinical Care and Services</span>
<span style="left:528.00px;top:973.00px;font-size:12.6px;color:#5b5876;letter-spacing:0.283px;">Policy &amp; Procedure</span>
<span style="left:751.60px;top:973.00px;font-size:15.3px;color:#3a3a3a;letter-spacing:0.416px;">01/07/2025</span>
<span style="left:973.00px;top:971.00px;font-size:16px;color:#343434;letter-spacing:1.202px;">00</span>
<span style="left:1128.70px;top:973.00px;font-size:15.3px;color:#3a3a3a;letter-spacing:0.639px;">17/07/2026</span>
<span style="left:1302.60px;top:972.00px;font-size:14.6px;color:#e9f0fb;letter-spacing:-0.134px;">SD</span>
<span style="left:1463.90px;top:973.00px;font-size:12.5px;color:#ffffff;font-weight:700;letter-spacing:-0.233px;">Active</span>
<span style="left:67.15px;top:1012.00px;font-size:16px;color:#303030;">10</span>
<span style="left:107.20px;top:1012.00px;font-size:16px;color:#383838;letter-spacing:0.476px;">Infection Prevention and Control</span>
<span style="left:528.00px;top:1014.00px;font-size:12.6px;color:#5b5876;letter-spacing:0.283px;">Policy &amp; Procedure</span>
<span style="left:751.60px;top:1014.00px;font-size:15.3px;color:#3a3a3a;letter-spacing:0.416px;">01/07/2025</span>
<span style="left:973.00px;top:1012.00px;font-size:16px;color:#343434;letter-spacing:1.202px;">00</span>
<span style="left:1128.70px;top:1014.00px;font-size:15.3px;color:#3a3a3a;letter-spacing:0.639px;">16/07/2026</span>
<span style="left:1300.30px;top:1016.00px;font-size:11.6px;color:#cf1f1f;font-weight:700;transform:scaleX(0.7267);transform-origin:0 0;-webkit-text-stroke:0.35px #cf1f1f;">ISO</span>
<span style="left:1463.90px;top:1014.00px;font-size:12.5px;color:#ffffff;font-weight:700;letter-spacing:-0.233px;">Active</span>
<span style="left:67.74px;top:1053.00px;font-size:16px;color:#303030;">11</span>
<span style="left:107.20px;top:1053.00px;font-size:16px;color:#383838;letter-spacing:0.557px;">Medication Management</span>
<span style="left:528.00px;top:1055.00px;font-size:12.6px;color:#5b5876;letter-spacing:0.283px;">Policy &amp; Procedure</span>
<span style="left:751.60px;top:1055.00px;font-size:15.3px;color:#3a3a3a;letter-spacing:0.416px;">01/07/2025</span>
<span style="left:973.00px;top:1053.00px;font-size:16px;color:#343434;letter-spacing:1.202px;">00</span>
<span style="left:1128.70px;top:1055.00px;font-size:15.3px;color:#3a3a3a;letter-spacing:0.639px;">17/07/2026</span>
<span style="left:1300.30px;top:1058.00px;font-size:11.6px;color:#cf1f1f;font-weight:700;transform:scaleX(0.7267);transform-origin:0 0;-webkit-text-stroke:0.35px #cf1f1f;">ISO</span>
<span style="left:1463.90px;top:1055.00px;font-size:12.5px;color:#ffffff;font-weight:700;letter-spacing:-0.233px;">Active</span>
<span style="left:67.15px;top:1094.00px;font-size:16px;color:#303030;">12</span>
<span style="left:107.20px;top:1094.00px;font-size:16px;color:#383838;letter-spacing:0.388px;">Preventing, Recognising, and Responding</span>
<span style="left:528.00px;top:1096.00px;font-size:12.6px;color:#5b5876;letter-spacing:0.283px;">Policy &amp; Procedure</span>
<span style="left:751.60px;top:1096.00px;font-size:15.3px;color:#3a3a3a;letter-spacing:0.416px;">01/07/2025</span>
<span style="left:973.00px;top:1094.00px;font-size:16px;color:#343434;letter-spacing:1.202px;">00</span>
<span style="left:1128.70px;top:1096.00px;font-size:15.3px;color:#3a3a3a;letter-spacing:0.639px;">18/07/2026</span>
<span style="left:1300.30px;top:1098.00px;font-size:11.6px;color:#cf1f1f;font-weight:700;transform:scaleX(0.7267);transform-origin:0 0;-webkit-text-stroke:0.35px #cf1f1f;">ISO</span>
<span style="left:1463.90px;top:1096.00px;font-size:12.5px;color:#ffffff;font-weight:700;letter-spacing:-0.233px;">Active</span>
<span style="left:67.15px;top:1135.00px;font-size:16px;color:#303030;">13</span>
<span style="left:108.20px;top:1135.00px;font-size:16px;color:#383838;letter-spacing:0.340px;">Clinical Governance</span>
<span style="left:528.00px;top:1137.00px;font-size:12.6px;color:#5b5876;letter-spacing:0.283px;">Policy &amp; Procedure</span>
<span style="left:751.60px;top:1137.00px;font-size:15.3px;color:#3a3a3a;letter-spacing:0.416px;">01/07/2025</span>
<span style="left:973.00px;top:1135.00px;font-size:16px;color:#343434;letter-spacing:1.202px;">00</span>
<span style="left:1129.70px;top:1137.00px;font-size:15.3px;color:#3a3a3a;letter-spacing:0.528px;">21/07/2026</span>
<span style="left:1302.60px;top:1136.00px;font-size:14.6px;color:#e9f0fb;letter-spacing:-0.134px;">SD</span>
<span style="left:1463.90px;top:1137.00px;font-size:12.5px;color:#ffffff;font-weight:700;letter-spacing:-0.233px;">Active</span>
<span style="left:67.15px;top:1176.00px;font-size:16px;color:#303030;">14</span>
<span style="left:108.20px;top:1176.00px;font-size:16px;color:#383838;letter-spacing:0.342px;">Organisational Governance</span>
<span style="left:528.00px;top:1178.00px;font-size:12.6px;color:#5b5876;letter-spacing:0.283px;">Policy &amp; Procedure</span>
<span style="left:751.60px;top:1178.00px;font-size:15.3px;color:#3a3a3a;letter-spacing:0.416px;">01/07/2025</span>
<span style="left:973.00px;top:1176.00px;font-size:16px;color:#343434;letter-spacing:1.202px;">00</span>
<span style="left:1129.70px;top:1178.00px;font-size:15.3px;color:#3a3a3a;letter-spacing:0.528px;">22/07/2026</span>
<span style="left:1302.60px;top:1177.00px;font-size:14.6px;color:#e9f0fb;letter-spacing:-0.134px;">SD</span>
<span style="left:1463.90px;top:1178.00px;font-size:12.5px;color:#ffffff;font-weight:700;letter-spacing:-0.233px;">Active</span>
<span style="left:67.15px;top:1217.00px;font-size:16px;color:#303030;">15</span>
<span style="left:108.20px;top:1217.00px;font-size:16px;color:#383838;letter-spacing:0.406px;">Quality Assurance and Continuous Improvement</span>
<span style="left:528.00px;top:1219.00px;font-size:12.6px;color:#5b5876;letter-spacing:0.283px;">Policy &amp; Procedure</span>
<span style="left:751.60px;top:1219.00px;font-size:15.3px;color:#3a3a3a;letter-spacing:0.416px;">01/07/2025</span>
<span style="left:973.00px;top:1217.00px;font-size:16px;color:#343434;letter-spacing:1.202px;">00</span>
<span style="left:1129.70px;top:1219.00px;font-size:15.3px;color:#3a3a3a;letter-spacing:0.528px;">23/07/2026</span>
<span style="left:1302.60px;top:1218.00px;font-size:14.6px;color:#e9f0fb;letter-spacing:-0.134px;">SD</span>
<span style="left:1463.90px;top:1219.00px;font-size:12.5px;color:#ffffff;font-weight:700;letter-spacing:-0.233px;">Active</span>
<span style="left:67.15px;top:1258.00px;font-size:16px;color:#303030;">16</span>
<span style="left:107.20px;top:1258.00px;font-size:16px;color:#383838;">Risk Management</span>
<span style="left:528.00px;top:1260.00px;font-size:12.6px;color:#5b5876;letter-spacing:0.283px;">Policy &amp; Procedure</span>
<span style="left:751.60px;top:1260.00px;font-size:15.3px;color:#3a3a3a;letter-spacing:0.416px;">01/07/2025</span>
<span style="left:973.00px;top:1258.00px;font-size:16px;color:#343434;letter-spacing:1.202px;">00</span>
<span style="left:1129.70px;top:1260.00px;font-size:15.3px;color:#3a3a3a;letter-spacing:0.528px;">24/07/2026</span>
<span style="left:1302.60px;top:1259.00px;font-size:14.6px;color:#e9f0fb;letter-spacing:-0.134px;">SD</span>
<span style="left:1463.90px;top:1260.00px;font-size:12.5px;color:#ffffff;font-weight:700;letter-spacing:-0.233px;">Active</span>

</div></body></html>
